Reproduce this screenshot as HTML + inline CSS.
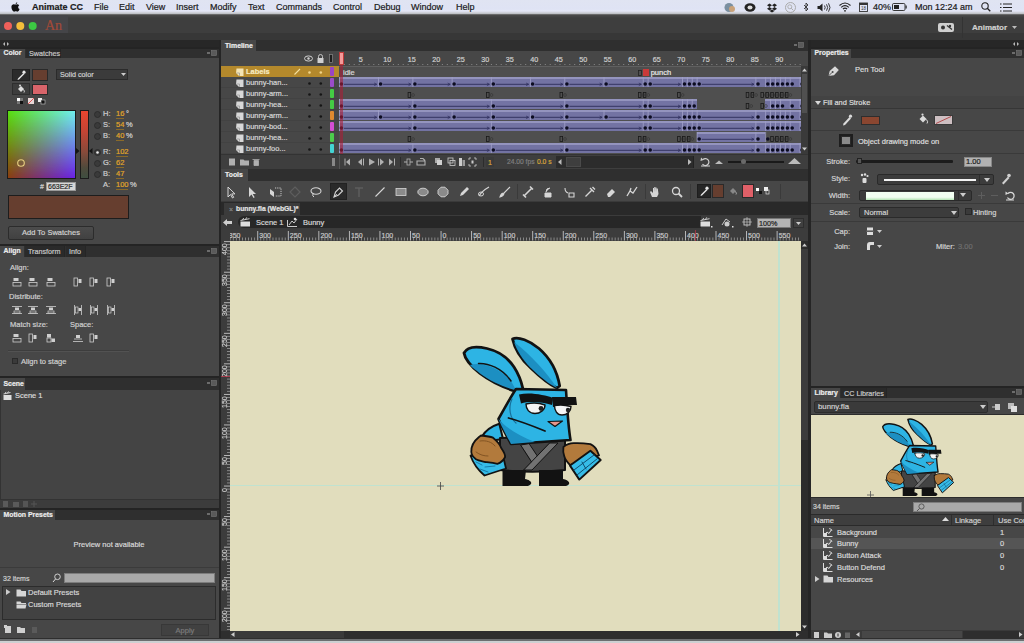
<!DOCTYPE html>
<html><head><meta charset="utf-8">
<style>
html,body{margin:0;padding:0;}
body{width:1024px;height:643px;overflow:hidden;position:relative;background:#3b3b3b;font-family:"Liberation Sans",sans-serif;}
.a{position:absolute;}
.t{position:absolute;white-space:nowrap;-webkit-text-stroke:0.2px currentColor;}
svg.a{overflow:visible;}
</style></head><body>
<div class="a" style="left:0px;top:0px;width:1024px;height:643px;background:#3b3b3b;"></div>
<div class="a" style="left:0px;top:0px;width:1024px;height:15px;background:linear-gradient(#e0e4f2 0px,#dfe3f4 9px,#e4e6f6 11px,#d0d2da 12.5px,#b8babf 14px,#6a6a6a 14.5px);"></div>
<svg class="a" style="left:11px;top:2px;" width="9" height="10" viewBox="0 0 9 10"><path d="M6.2 0.3c0.1 0.9-0.6 1.9-1.5 1.9-0.1-0.9 0.6-1.8 1.5-1.9zM4.6 2.6c0.5 0 1-0.4 1.7-0.4 0.4 0 1.3 0.1 1.9 1-1.6 1-1.3 3.2 0.4 3.9-0.3 0.9-1.1 2.6-2.1 2.6-0.7 0-0.8-0.4-1.7-0.4-0.9 0-1.1 0.4-1.7 0.4C2 9.7 0.4 7.3 0.4 5.1c0-2 1.2-2.9 2.4-2.9 0.7 0 1.3 0.4 1.8 0.4z" fill="#111"/></svg>
<div class="t" style="top:2.80px;font-size:9px;line-height:9px;color:#1a1a1a;font-weight:bold;left:32px;">Animate CC</div>
<div class="t" style="top:2.80px;font-size:9px;line-height:9px;color:#1a1a1a;left:94px;">File</div>
<div class="t" style="top:2.80px;font-size:9px;line-height:9px;color:#1a1a1a;left:119px;">Edit</div>
<div class="t" style="top:2.80px;font-size:9px;line-height:9px;color:#1a1a1a;left:146px;">View</div>
<div class="t" style="top:2.80px;font-size:9px;line-height:9px;color:#1a1a1a;left:176px;">Insert</div>
<div class="t" style="top:2.80px;font-size:9px;line-height:9px;color:#1a1a1a;left:210px;">Modify</div>
<div class="t" style="top:2.80px;font-size:9px;line-height:9px;color:#1a1a1a;left:248px;">Text</div>
<div class="t" style="top:2.80px;font-size:9px;line-height:9px;color:#1a1a1a;left:276px;">Commands</div>
<div class="t" style="top:2.80px;font-size:9px;line-height:9px;color:#1a1a1a;left:333px;">Control</div>
<div class="t" style="top:2.80px;font-size:9px;line-height:9px;color:#1a1a1a;left:374px;">Debug</div>
<div class="t" style="top:2.80px;font-size:9px;line-height:9px;color:#1a1a1a;left:411px;">Window</div>
<div class="t" style="top:2.80px;font-size:9px;line-height:9px;color:#1a1a1a;left:456px;">Help</div>
<svg class="a" style="left:724px;top:2px;" width="12" height="11" viewBox="0 0 12 11"><circle cx="5" cy="5.5" r="4.5" fill="#7a8fa0"/><circle cx="8" cy="7" r="3" fill="#c9a27a"/></svg>
<svg class="a" style="left:744px;top:3px;" width="12" height="9" viewBox="0 0 12 9"><ellipse cx="6" cy="4.5" rx="5.5" ry="4.2" fill="#222"/><ellipse cx="6" cy="4.5" rx="2.5" ry="2" fill="#ddd"/></svg>
<svg class="a" style="left:767px;top:3px;" width="10" height="9" viewBox="0 0 10 9"><path d="M2.5 0.5L5 2.2 2.5 4 0 2.2zM7.5 0.5L10 2.2 7.5 4 5 2.2zM2.5 4L5 5.8 2.5 7.5 0 5.8zM7.5 4L10 5.8 7.5 7.5 5 5.8zM5 6.5l2.5 1.6L5 9.5 2.5 8.1z" fill="#222"/></svg>
<svg class="a" style="left:785px;top:2px;" width="11" height="11" viewBox="0 0 11 11"><circle cx="5.5" cy="5.5" r="5" fill="none" stroke="#aaa" stroke-width="1"/><circle cx="4.8" cy="4.8" r="2" fill="none" stroke="#aaa" stroke-width="0.9"/><path d="M6.3 6.3l2 2" stroke="#aaa" stroke-width="1"/></svg>
<svg class="a" style="left:803px;top:2px;" width="6" height="11" viewBox="0 0 6 11"><path d="M1 3l4 4-2 2V1l2 2-4 4" fill="none" stroke="#333" stroke-width="0.9"/></svg>
<svg class="a" style="left:817px;top:3px;" width="14" height="9" viewBox="0 0 14 9"><path d="M0.5 3h2l3-2.5v8l-3-2.5h-2z" fill="#222"/><path d="M7.5 2.5q1.3 2 0 4M9.5 1.3q2.3 3.2 0 6.4M11.5 0.3q3 4.2 0 8.4" fill="none" stroke="#222" stroke-width="0.9"/></svg>
<svg class="a" style="left:839px;top:2px;" width="12" height="10" viewBox="0 0 12 10"><path d="M0.5 3.5q5.5-5 11 0M2.2 5.3q3.8-3.3 7.6 0M3.9 7q2.1-1.7 4.2 0" fill="none" stroke="#222" stroke-width="1.1"/><circle cx="6" cy="8.8" r="0.9" fill="#222"/></svg>
<svg class="a" style="left:859px;top:2px;" width="9" height="10" viewBox="0 0 9 10"><rect x="0.5" y="1" width="8" height="8.5" fill="none" stroke="#333" stroke-width="0.9"/><rect x="0.5" y="1" width="8" height="2" fill="#333"/><text x="4.5" y="8.4" font-size="4.5" text-anchor="middle" fill="#333" font-family="Liberation Sans">18</text></svg>
<div class="t" style="top:2.80px;font-size:9px;line-height:9px;color:#1a1a1a;left:873px;">40%</div>
<svg class="a" style="left:892px;top:3px;" width="15" height="8" viewBox="0 0 15 8"><rect x="0.5" y="0.5" width="12.5" height="7" rx="1.2" fill="none" stroke="#222" stroke-width="0.9"/><rect x="2" y="2" width="5" height="4" fill="#222"/><rect x="13.5" y="2.5" width="1.2" height="3" fill="#222"/></svg>
<div class="t" style="top:2.80px;font-size:9px;line-height:9px;color:#1a1a1a;left:915px;">Mon 12:24 am</div>
<svg class="a" style="left:981px;top:2px;" width="10" height="10" viewBox="0 0 10 10"><circle cx="4" cy="4" r="3.2" fill="none" stroke="#222" stroke-width="1.1"/><path d="M6.3 6.3l3 3" stroke="#222" stroke-width="1.3"/></svg>
<svg class="a" style="left:1000px;top:3px;" width="12" height="9" viewBox="0 0 12 9"><path d="M0 1h1.5M3 1h9M0 4.5h1.5M3 4.5h9M0 8h1.5M3 8h9" stroke="#222" stroke-width="1.2"/></svg>
<div class="a" style="left:0px;top:15px;width:1024px;height:18px;background:linear-gradient(#4a4a4a,#3e3e3e 3px);"></div>
<div class="a" style="left:0px;top:33px;width:1024px;height:7px;background:#373737;"></div>
<div class="a" style="left:0px;top:15px;width:68px;height:18px;background:#454548;"></div>
<svg class="a" style="left:3px;top:21px;" width="36" height="10" viewBox="0 0 36 10"><circle cx="5" cy="5" r="4" fill="#f0605a"/><circle cx="17.3" cy="5" r="4" fill="#f5bd3a"/><circle cx="29.7" cy="5" r="4" fill="#3cc943"/></svg>
<div class="t" style="left:45px;top:17px;font-family:'Liberation Serif',serif;font-size:14px;line-height:18px;color:#a24a38;">An</div>
<div class="a" style="left:938px;top:23px;width:16px;height:9px;background:#cfcfcf;border-radius:2px;"></div>
<svg class="a" style="left:938px;top:23px;" width="16" height="9" viewBox="0 0 16 9"><circle cx="5" cy="4.5" r="2" fill="#333"/><path d="M9 2.5l5 4" stroke="#333" stroke-width="1.3"/><circle cx="12" cy="3" r="1.2" fill="#333"/></svg>
<div class="a" style="left:962px;top:17px;width:1px;height:21px;background:#333;"></div>
<div class="t" style="top:23.50px;font-size:8px;line-height:8px;color:#d0d0d0;font-weight:bold;left:972px;">Animator</div>
<svg class="a" style="left:1012px;top:26px;" width="5" height="3" viewBox="0 0 5 3"><path d="M0 0h5L2.5 3z" fill="#bbb"/></svg>
<div class="a" style="left:0px;top:40px;width:219px;height:8px;background:#272727;"></div>
<svg class="a" style="left:3px;top:42px;" width="6" height="4" viewBox="0 0 6 4"><path d="M0 2l2-2v4zM6 2l-2-2v4z" fill="#bbb"/></svg>
<div class="a" style="left:0px;top:48px;width:219px;height:10px;background:#2f2f2f;"></div>
<div class="a" style="left:0px;top:47px;width:219px;height:2px;background:#242424;"></div>
<div class="a" style="left:0px;top:49px;width:25px;height:9px;background:#474747;"></div>
<div class="t" style="top:50.35px;font-size:6.9px;line-height:6.9px;color:#ececec;font-weight:bold;left:3.5px;">Color</div>
<div class="a" style="left:26px;top:49px;width:35px;height:9px;background:#2a2a2a;box-sizing:border-box;border-right:1px solid #252525;"></div>
<div class="t" style="top:50.20px;font-size:7.2px;line-height:7.2px;color:#c8c8c8;left:29px;">Swatches</div>
<svg class="a" style="left:207px;top:50px;" width="10" height="6" viewBox="0 0 10 6"><path d="M0 3h3" stroke="#aaa" stroke-width="1"/><rect x="4.5" y="0.5" width="5" height="5" fill="#5a5a5a" stroke="#777" stroke-width="0.6"/></svg>
<div class="a" style="left:0px;top:58px;width:219px;height:187px;background:#474747;"></div>
<div class="a" style="left:12px;top:69px;width:18px;height:12px;background:#2b2b2b;box-sizing:border-box;border:1px solid #222;"></div>
<svg class="a" style="left:16px;top:70px;" width="10" height="10" viewBox="0 0 10 10"><path d="M2 8.5l5.5-5.5 1 1-5.5 5.5-1.5 0.5z" fill="#e8e8e8"/><circle cx="8" cy="2.2" r="1.6" fill="#e8e8e8"/></svg>
<div class="a" style="left:32px;top:69px;width:16px;height:12px;background:#663e2f;box-sizing:border-box;border:1px solid #2a2a2a;"></div>
<div class="a" style="left:12px;top:83px;width:18px;height:12px;background:#3d3d3d;box-sizing:border-box;border:1px solid #2e2e2e;"></div>
<svg class="a" style="left:16px;top:84px;" width="10" height="10" viewBox="0 0 10 10"><path d="M2 5l3-3 3 3-3 3z" fill="#ddd"/><path d="M7.5 5.5q1.5 2 0.5 3" stroke="#ddd" fill="none"/><circle cx="4" cy="1.5" r="1" fill="#ddd"/></svg>
<div class="a" style="left:32px;top:84px;width:16px;height:11px;background:#d8646a;box-sizing:border-box;border:1px solid #2a2a2a;"></div>
<svg class="a" style="left:17px;top:97px;" width="30" height="8" viewBox="0 0 30 8"><rect x="0" y="1" width="3" height="3" fill="#fff"/><rect x="3" y="4" width="3" height="3" fill="#111"/><rect x="3" y="1" width="3" height="3" fill="#777"/><rect x="0" y="4" width="3" height="3" fill="#777"/><rect x="11" y="1" width="6" height="6" fill="#e8d8d8"/><path d="M11 7l6-6" stroke="#d33" stroke-width="0.8"/><rect x="21" y="1" width="4" height="4" fill="#eee"/><rect x="24" y="3" width="4" height="4" fill="#111" stroke="#ccc" stroke-width="0.6"/></svg>
<div class="a" style="left:56px;top:69px;width:72px;height:11px;background:#3b3b3b;box-sizing:border-box;border:1px solid #2b2b2b;"></div>
<div class="t" style="top:71.20px;font-size:7.2px;line-height:7.2px;color:#cfcfcf;left:60px;">Solid color</div>
<svg class="a" style="left:121px;top:73px;" width="5" height="3" viewBox="0 0 5 3"><path d="M0 0h5L2.5 3z" fill="#ccc"/></svg>
<div class="a" style="left:7px;top:110px;width:69px;height:69px;background:#111;box-sizing:border-box;border:1px solid #1b1b1b;"></div>
<div class="a" style="left:8px;top:111px;width:67px;height:67px;background:linear-gradient(to right,#58e010,#70f0f0);"></div>
<div class="a" style="left:8px;top:111px;width:67px;height:67px;background:linear-gradient(to right,#8a3c10,#6a20e8);-webkit-mask-image:linear-gradient(transparent,#000);mask-image:linear-gradient(transparent,#000);"></div>
<svg class="a" style="left:15.5px;top:157.5px;" width="12" height="12" viewBox="0 0 12 12"><circle cx="5" cy="5" r="3.3" fill="none" stroke="#e8d080" stroke-width="1.1"/></svg>
<div class="a" style="left:80px;top:110px;width:9px;height:69px;background:linear-gradient(#e8452f,#c44434 30%,#8a4a3a 60%,#4e4a3c 85%,#3e4e40);box-sizing:border-box;border:1px solid #1b1b1b;"></div>
<svg class="a" style="left:76px;top:148px;" width="4" height="6" viewBox="0 0 4 6"><path d="M0 0l3.5 3L0 6z" fill="#151515"/></svg>
<svg class="a" style="left:89px;top:148px;" width="4" height="6" viewBox="0 0 4 6"><path d="M3.5 0L0 3l3.5 3z" fill="#151515"/></svg>
<svg class="a" style="left:94px;top:111px;" width="7" height="7" viewBox="0 0 7 7"><circle cx="3.5" cy="3.5" r="3" fill="#3a3a3a" stroke="#2a2a2a" stroke-width="0.8"/></svg>
<div class="t" style="top:110.25px;font-size:7.5px;line-height:7.5px;color:#cfcfcf;left:103px;">H:</div>
<div class="t" style="top:110.25px;font-size:7.5px;line-height:7.5px;color:#e0a52a;left:116px;">16</div>
<div class="a" style="left:116px;top:118px;width:8px;height:1px;background:#8a6a2a;"></div>
<div class="t" style="top:110.25px;font-size:7.5px;line-height:7.5px;color:#cfcfcf;left:125.9px;">°</div>
<svg class="a" style="left:94px;top:122px;" width="7" height="7" viewBox="0 0 7 7"><circle cx="3.5" cy="3.5" r="3" fill="#3a3a3a" stroke="#2a2a2a" stroke-width="0.8"/></svg>
<div class="t" style="top:121.25px;font-size:7.5px;line-height:7.5px;color:#cfcfcf;left:103px;">S:</div>
<div class="t" style="top:121.25px;font-size:7.5px;line-height:7.5px;color:#e0a52a;left:116px;">54</div>
<div class="a" style="left:116px;top:129px;width:8px;height:1px;background:#8a6a2a;"></div>
<div class="t" style="top:121.25px;font-size:7.5px;line-height:7.5px;color:#cfcfcf;left:125.9px;">%</div>
<svg class="a" style="left:94px;top:133px;" width="7" height="7" viewBox="0 0 7 7"><circle cx="3.5" cy="3.5" r="3" fill="#3a3a3a" stroke="#2a2a2a" stroke-width="0.8"/></svg>
<div class="t" style="top:132.25px;font-size:7.5px;line-height:7.5px;color:#cfcfcf;left:103px;">B:</div>
<div class="t" style="top:132.25px;font-size:7.5px;line-height:7.5px;color:#e0a52a;left:116px;">40</div>
<div class="a" style="left:116px;top:140px;width:8px;height:1px;background:#8a6a2a;"></div>
<div class="t" style="top:132.25px;font-size:7.5px;line-height:7.5px;color:#cfcfcf;left:125.9px;">%</div>
<svg class="a" style="left:94px;top:149px;" width="7" height="7" viewBox="0 0 7 7"><circle cx="3.5" cy="3.5" r="3" fill="#3a3a3a" stroke="#2a2a2a" stroke-width="0.8"/><circle cx="3.5" cy="3.5" r="1.3" fill="#eee"/></svg>
<div class="t" style="top:148.25px;font-size:7.5px;line-height:7.5px;color:#cfcfcf;left:103px;">R:</div>
<div class="t" style="top:148.25px;font-size:7.5px;line-height:7.5px;color:#e0a52a;left:116px;">102</div>
<div class="a" style="left:116px;top:156px;width:12px;height:1px;background:#8a6a2a;"></div>
<svg class="a" style="left:94px;top:160px;" width="7" height="7" viewBox="0 0 7 7"><circle cx="3.5" cy="3.5" r="3" fill="#3a3a3a" stroke="#2a2a2a" stroke-width="0.8"/></svg>
<div class="t" style="top:159.25px;font-size:7.5px;line-height:7.5px;color:#cfcfcf;left:103px;">G:</div>
<div class="t" style="top:159.25px;font-size:7.5px;line-height:7.5px;color:#e0a52a;left:116px;">62</div>
<div class="a" style="left:116px;top:167px;width:8px;height:1px;background:#8a6a2a;"></div>
<svg class="a" style="left:94px;top:171px;" width="7" height="7" viewBox="0 0 7 7"><circle cx="3.5" cy="3.5" r="3" fill="#3a3a3a" stroke="#2a2a2a" stroke-width="0.8"/></svg>
<div class="t" style="top:170.25px;font-size:7.5px;line-height:7.5px;color:#cfcfcf;left:103px;">B:</div>
<div class="t" style="top:170.25px;font-size:7.5px;line-height:7.5px;color:#e0a52a;left:116px;">47</div>
<div class="a" style="left:116px;top:178px;width:8px;height:1px;background:#8a6a2a;"></div>
<div class="t" style="top:181.25px;font-size:7.5px;line-height:7.5px;color:#cfcfcf;left:103px;">A:</div>
<div class="t" style="top:181.25px;font-size:7.5px;line-height:7.5px;color:#e0a52a;left:116px;">100</div>
<div class="a" style="left:116px;top:189px;width:12px;height:1px;background:#8a6a2a;"></div>
<div class="t" style="top:181.25px;font-size:7.5px;line-height:7.5px;color:#cfcfcf;left:130.1px;">%</div>
<div class="t" style="top:182.50px;font-size:7px;line-height:7px;color:#cfcfcf;left:40px;">#</div>
<div class="a" style="left:46px;top:182px;width:30px;height:9px;background:#d6d6d6;box-sizing:border-box;border:1px solid #999;"></div>
<div class="t" style="top:182.80px;font-size:7px;line-height:7px;color:#2a2a2a;left:48px;">663E2F</div>
<div class="a" style="left:8px;top:195px;width:121px;height:24px;background:#663e2f;box-sizing:border-box;border:1px solid #1d1d1d;"></div>
<div class="a" style="left:8px;top:226px;width:86px;height:14px;background:linear-gradient(#4c4c4c,#414141);box-sizing:border-box;border:1px solid #2c2c2c;border-radius:2px;"></div>
<div class="t" style="top:229.25px;font-size:7.5px;line-height:7.5px;color:#d0d0d0;left:-149px;width:400px;text-align:center;">Add To Swatches</div>
<div class="a" style="left:0px;top:245px;width:219px;height:12px;background:#2f2f2f;"></div>
<div class="a" style="left:0px;top:244px;width:219px;height:2px;background:#242424;"></div>
<div class="a" style="left:0px;top:246px;width:24px;height:11px;background:#474747;"></div>
<div class="t" style="top:248.35px;font-size:6.9px;line-height:6.9px;color:#ececec;font-weight:bold;left:3.5px;">Align</div>
<div class="a" style="left:25px;top:246px;width:40px;height:11px;background:#2a2a2a;box-sizing:border-box;border-right:1px solid #252525;"></div>
<div class="t" style="top:248.20px;font-size:7.2px;line-height:7.2px;color:#c8c8c8;left:28px;">Transform</div>
<div class="a" style="left:66px;top:246px;width:20px;height:11px;background:#2a2a2a;box-sizing:border-box;border-right:1px solid #252525;"></div>
<div class="t" style="top:248.20px;font-size:7.2px;line-height:7.2px;color:#c8c8c8;left:69px;">Info</div>
<svg class="a" style="left:207px;top:248px;" width="10" height="6" viewBox="0 0 10 6"><path d="M0 3h3" stroke="#aaa" stroke-width="1"/><rect x="4.5" y="0.5" width="5" height="5" fill="#5a5a5a" stroke="#777" stroke-width="0.6"/></svg>
<div class="a" style="left:0px;top:257px;width:219px;height:119px;background:#474747;"></div>
<div class="t" style="top:264.25px;font-size:7.5px;line-height:7.5px;color:#cfcfcf;left:10px;">Align:</div>
<svg class="a" style="left:12px;top:277px;" width="10" height="10" viewBox="0 0 10 10"><rect x="1.5" y="1" width="5" height="3" fill="#cfcfcf"/><rect x="1" y="5.5" width="8" height="3.5" fill="none" stroke="#cfcfcf" stroke-width="0.8"/></svg>
<svg class="a" style="left:28px;top:277px;" width="10" height="10" viewBox="0 0 10 10"><rect x="1.5" y="1" width="5" height="3" fill="#cfcfcf"/><rect x="1" y="5.5" width="8" height="3.5" fill="none" stroke="#cfcfcf" stroke-width="0.8"/></svg>
<svg class="a" style="left:46px;top:277px;" width="10" height="10" viewBox="0 0 10 10"><rect x="1.5" y="1" width="5" height="3" fill="#cfcfcf"/><rect x="1" y="5.5" width="8" height="3.5" fill="none" stroke="#cfcfcf" stroke-width="0.8"/></svg>
<svg class="a" style="left:73px;top:277px;" width="10" height="10" viewBox="0 0 10 10"><rect x="1" y="1" width="3.5" height="8" fill="none" stroke="#cfcfcf" stroke-width="0.8"/><rect x="5.5" y="2" width="3" height="4" fill="#cfcfcf"/></svg>
<svg class="a" style="left:89px;top:277px;" width="10" height="10" viewBox="0 0 10 10"><rect x="1" y="1" width="3.5" height="8" fill="none" stroke="#cfcfcf" stroke-width="0.8"/><rect x="5.5" y="2" width="3" height="4" fill="#cfcfcf"/></svg>
<svg class="a" style="left:106px;top:277px;" width="10" height="10" viewBox="0 0 10 10"><rect x="1" y="1" width="3.5" height="8" fill="none" stroke="#cfcfcf" stroke-width="0.8"/><rect x="5.5" y="2" width="3" height="4" fill="#cfcfcf"/></svg>
<div class="t" style="top:292.75px;font-size:7.5px;line-height:7.5px;color:#cfcfcf;left:9px;">Distribute:</div>
<svg class="a" style="left:12px;top:305px;" width="10" height="10" viewBox="0 0 10 10"><path d="M0 1.5h10M0 8.5h10" stroke="#cfcfcf" stroke-width="0.8"/><rect x="3" y="2.5" width="4" height="2.5" fill="#cfcfcf"/><rect x="2" y="6" width="6" height="2" fill="none" stroke="#cfcfcf" stroke-width="0.7"/></svg>
<svg class="a" style="left:28px;top:305px;" width="10" height="10" viewBox="0 0 10 10"><path d="M0 1.5h10M0 8.5h10" stroke="#cfcfcf" stroke-width="0.8"/><rect x="3" y="2.5" width="4" height="2.5" fill="#cfcfcf"/><rect x="2" y="6" width="6" height="2" fill="none" stroke="#cfcfcf" stroke-width="0.7"/></svg>
<svg class="a" style="left:46px;top:305px;" width="10" height="10" viewBox="0 0 10 10"><path d="M0 1.5h10M0 8.5h10" stroke="#cfcfcf" stroke-width="0.8"/><rect x="3" y="2.5" width="4" height="2.5" fill="#cfcfcf"/><rect x="2" y="6" width="6" height="2" fill="none" stroke="#cfcfcf" stroke-width="0.7"/></svg>
<svg class="a" style="left:73px;top:305px;" width="10" height="10" viewBox="0 0 10 10"><path d="M1.5 0v10M8.5 0v10" stroke="#cfcfcf" stroke-width="0.8"/><rect x="2.5" y="2" width="2.5" height="6" fill="none" stroke="#cfcfcf" stroke-width="0.7"/><rect x="5.5" y="3" width="2.5" height="3" fill="#cfcfcf"/></svg>
<svg class="a" style="left:89px;top:305px;" width="10" height="10" viewBox="0 0 10 10"><path d="M1.5 0v10M8.5 0v10" stroke="#cfcfcf" stroke-width="0.8"/><rect x="2.5" y="2" width="2.5" height="6" fill="none" stroke="#cfcfcf" stroke-width="0.7"/><rect x="5.5" y="3" width="2.5" height="3" fill="#cfcfcf"/></svg>
<svg class="a" style="left:106px;top:305px;" width="10" height="10" viewBox="0 0 10 10"><path d="M1.5 0v10M8.5 0v10" stroke="#cfcfcf" stroke-width="0.8"/><rect x="2.5" y="2" width="2.5" height="6" fill="none" stroke="#cfcfcf" stroke-width="0.7"/><rect x="5.5" y="3" width="2.5" height="3" fill="#cfcfcf"/></svg>
<div class="t" style="top:321.25px;font-size:7.5px;line-height:7.5px;color:#cfcfcf;left:10px;">Match size:</div>
<div class="t" style="top:321.25px;font-size:7.5px;line-height:7.5px;color:#cfcfcf;left:70px;">Space:</div>
<svg class="a" style="left:12px;top:333px;" width="10" height="10" viewBox="0 0 10 10"><rect x="1.5" y="1" width="5" height="3" fill="#cfcfcf"/><rect x="1" y="5.5" width="8" height="3.5" fill="none" stroke="#cfcfcf" stroke-width="0.8"/></svg>
<svg class="a" style="left:28px;top:333px;" width="10" height="10" viewBox="0 0 10 10"><rect x="1" y="1" width="3.5" height="8" fill="none" stroke="#cfcfcf" stroke-width="0.8"/><rect x="5.5" y="2" width="3" height="4" fill="#cfcfcf"/></svg>
<svg class="a" style="left:46px;top:333px;" width="10" height="10" viewBox="0 0 10 10"><rect x="1" y="1" width="4" height="3.5" fill="#cfcfcf"/><rect x="1" y="5" width="4" height="4" fill="none" stroke="#cfcfcf" stroke-width="0.8"/><rect x="5.5" y="5.5" width="3.5" height="3.5" fill="#cfcfcf"/></svg>
<svg class="a" style="left:73px;top:333px;" width="10" height="10" viewBox="0 0 10 10"><path d="M0 8.5h10" stroke="#cfcfcf" stroke-width="0.8"/><rect x="3" y="2" width="4" height="3" fill="#cfcfcf"/><path d="M1 6h8" stroke="#cfcfcf" stroke-width="0.8"/></svg>
<svg class="a" style="left:89px;top:333px;" width="10" height="10" viewBox="0 0 10 10"><rect x="1" y="1" width="3.5" height="8" fill="none" stroke="#cfcfcf" stroke-width="0.8"/><rect x="5.5" y="2" width="3" height="4" fill="#cfcfcf"/></svg>
<div class="a" style="left:8px;top:350px;width:121px;height:1px;background:#3d3d3d;"></div>
<div class="a" style="left:8px;top:351px;width:121px;height:1px;background:#525252;"></div>
<div class="a" style="left:12px;top:358px;width:6px;height:6px;background:#3a3a3a;box-sizing:border-box;border:1px solid #2a2a2a;"></div>
<div class="t" style="top:357.55px;font-size:7.5px;line-height:7.5px;color:#d0d0d0;left:21px;">Align to stage</div>
<div class="a" style="left:0px;top:376px;width:219px;height:1px;background:#2a2a2a;"></div>
<div class="a" style="left:0px;top:377px;width:219px;height:13px;background:#2f2f2f;"></div>
<div class="a" style="left:0px;top:376px;width:219px;height:2px;background:#242424;"></div>
<div class="a" style="left:0px;top:378px;width:25px;height:12px;background:#474747;"></div>
<div class="t" style="top:380.85px;font-size:6.9px;line-height:6.9px;color:#ececec;font-weight:bold;left:3.5px;">Scene</div>
<svg class="a" style="left:207px;top:380px;" width="10" height="6" viewBox="0 0 10 6"><path d="M0 3h3" stroke="#aaa" stroke-width="1"/><rect x="4.5" y="0.5" width="5" height="5" fill="#5a5a5a" stroke="#777" stroke-width="0.6"/></svg>
<div class="a" style="left:0px;top:390px;width:219px;height:109px;background:#444444;"></div>
<div class="a" style="left:0px;top:390px;width:1px;height:109px;background:#333;"></div>
<svg class="a" style="left:3px;top:391px;" width="9" height="10" viewBox="0 0 9 10"><path d="M0.5 3l7-1.5M2 2.7l1-1.8M4.5 2.2l1-1.8" stroke="#ddd" stroke-width="0.9"/><rect x="0.5" y="4" width="8" height="5" fill="#ddd"/></svg>
<div class="t" style="top:392.25px;font-size:7.5px;line-height:7.5px;color:#dadada;left:15px;">Scene 1</div>
<div class="a" style="left:0px;top:499px;width:219px;height:9px;background:#3c3c3c;"></div>
<div class="a" style="left:0px;top:499px;width:219px;height:1px;background:#333;"></div>
<svg class="a" style="left:2px;top:500px;" width="40" height="8" viewBox="0 0 40 8"><rect x="1" y="1" width="5" height="6" fill="#5a5a5a"/><rect x="11" y="2" width="6" height="5" fill="#5a5a5a"/><rect x="21" y="1" width="5" height="6" fill="#555"/><path d="M32 1v6M29 4h6" stroke="#555"/></svg>
<div class="a" style="left:0px;top:508px;width:219px;height:1px;background:#2a2a2a;"></div>
<div class="a" style="left:0px;top:509px;width:219px;height:11px;background:#2f2f2f;"></div>
<div class="a" style="left:0px;top:508px;width:219px;height:2px;background:#242424;"></div>
<div class="a" style="left:0px;top:510px;width:55px;height:10px;background:#474747;"></div>
<div class="t" style="top:511.85px;font-size:6.9px;line-height:6.9px;color:#ececec;font-weight:bold;left:3.5px;">Motion Presets</div>
<svg class="a" style="left:207px;top:511px;" width="10" height="6" viewBox="0 0 10 6"><path d="M0 3h3" stroke="#aaa" stroke-width="1"/><rect x="4.5" y="0.5" width="5" height="5" fill="#5a5a5a" stroke="#777" stroke-width="0.6"/></svg>
<div class="a" style="left:0px;top:520px;width:219px;height:118px;background:#474747;"></div>
<div class="t" style="top:540.75px;font-size:7.5px;line-height:7.5px;color:#d6d6d6;left:-91px;width:400px;text-align:center;">Preview not available</div>
<div class="a" style="left:0px;top:567px;width:219px;height:1px;background:#3b3b3b;"></div>
<div class="t" style="top:575.00px;font-size:7px;line-height:7px;color:#cfcfcf;left:3px;">32 items</div>
<svg class="a" style="left:52px;top:573px;" width="9" height="10" viewBox="0 0 9 10"><circle cx="5.5" cy="3.8" r="2.8" fill="none" stroke="#ddd" stroke-width="0.9"/><path d="M3.5 6l-2.5 3" stroke="#ddd" stroke-width="1"/></svg>
<div class="a" style="left:64px;top:573px;width:151px;height:10px;background:#a9a9a9;box-sizing:border-box;border:1px solid #7d7d7d;"></div>
<div class="a" style="left:2px;top:586px;width:214px;height:34px;background:#424242;box-sizing:border-box;border:1px solid #2c2c2c;"></div>
<svg class="a" style="left:6px;top:589px;" width="5" height="6" viewBox="0 0 5 6"><path d="M0 0l4.5 3L0 6z" fill="#ccc"/></svg>
<svg class="a" style="left:16px;top:588px;" width="11" height="9" viewBox="0 0 11 9"><path d="M0.5 1.5h4l1 1.5h4.5v5.5H0.5z" fill="#d6d6d6"/></svg>
<div class="t" style="top:588.75px;font-size:7.5px;line-height:7.5px;color:#d6d6d6;left:28px;">Default Presets</div>
<svg class="a" style="left:16px;top:600px;" width="11" height="9" viewBox="0 0 11 9"><path d="M0.5 1.5h4l1 1.5h4.5v1H0.5z" fill="#d6d6d6"/><path d="M0.5 4.5h10l-1 4H0.5z" fill="#d6d6d6"/></svg>
<div class="t" style="top:600.75px;font-size:7.5px;line-height:7.5px;color:#d6d6d6;left:28px;">Custom Presets</div>
<svg class="a" style="left:4px;top:625px;" width="36" height="10" viewBox="0 0 36 10"><rect x="1" y="1" width="6" height="7" fill="#cfcfcf"/><rect x="0" y="0" width="3" height="3" fill="#cfcfcf"/><path d="M13 2h3l1 1h4v5h-8z" fill="#cfcfcf"/><rect x="28" y="2" width="5" height="6" fill="#5a5a5a"/></svg>
<div class="a" style="left:161px;top:624px;width:48px;height:12px;background:#414141;box-sizing:border-box;border:1px solid #383838;"></div>
<div class="t" style="top:626.55px;font-size:7.5px;line-height:7.5px;color:#7a7a7a;left:-15px;width:400px;text-align:center;">Apply</div>
<div class="a" style="left:219px;top:40px;width:2px;height:598px;background:#252525;"></div>
<div class="a" style="left:221px;top:40px;width:587px;height:11px;background:#2f2f2f;"></div>
<div class="a" style="left:221px;top:40px;width:35px;height:11px;background:#474747;"></div>
<div class="t" style="top:42.55px;font-size:6.9px;line-height:6.9px;color:#ececec;font-weight:bold;left:225px;">Timeline</div>
<svg class="a" style="left:794px;top:42px;" width="10" height="6" viewBox="0 0 10 6"><path d="M0 3h3" stroke="#aaa" stroke-width="1"/><rect x="4.5" y="0.5" width="5" height="5" fill="#5a5a5a" stroke="#777" stroke-width="0.6"/></svg>
<div class="a" style="left:221px;top:51px;width:587px;height:15px;background:#474747;"></div>
<svg class="a" style="left:304px;top:54px;" width="32" height="9" viewBox="0 0 32 9"><ellipse cx="4.5" cy="4.5" rx="4" ry="2.6" fill="none" stroke="#d0d0d0" stroke-width="1"/><circle cx="4.5" cy="4.5" r="1.2" fill="#d0d0d0"/><path d="M14.5 4V2.5a2 2 0 0 1 4 0V4" fill="none" stroke="#d0d0d0" stroke-width="0.9"/><rect x="13.5" y="4" width="6" height="5" fill="#d0d0d0"/><rect x="25.5" y="0.5" width="3" height="8" fill="#1e1e1e" stroke="#888" stroke-width="0.7"/></svg>
<div class="t" style="top:56.00px;font-size:7.2px;line-height:7.2px;color:#cfcfcf;left:358.8px;">5</div>
<div class="t" style="top:56.00px;font-size:7.2px;line-height:7.2px;color:#cfcfcf;left:383.3px;">10</div>
<div class="t" style="top:56.00px;font-size:7.2px;line-height:7.2px;color:#cfcfcf;left:407.8px;">15</div>
<div class="t" style="top:56.00px;font-size:7.2px;line-height:7.2px;color:#cfcfcf;left:432.3px;">20</div>
<div class="t" style="top:56.00px;font-size:7.2px;line-height:7.2px;color:#cfcfcf;left:456.8px;">25</div>
<div class="t" style="top:56.00px;font-size:7.2px;line-height:7.2px;color:#cfcfcf;left:481.3px;">30</div>
<div class="t" style="top:56.00px;font-size:7.2px;line-height:7.2px;color:#cfcfcf;left:505.8px;">35</div>
<div class="t" style="top:56.00px;font-size:7.2px;line-height:7.2px;color:#cfcfcf;left:530.3000000000001px;">40</div>
<div class="t" style="top:56.00px;font-size:7.2px;line-height:7.2px;color:#cfcfcf;left:554.8000000000001px;">45</div>
<div class="t" style="top:56.00px;font-size:7.2px;line-height:7.2px;color:#cfcfcf;left:579.3000000000001px;">50</div>
<div class="t" style="top:56.00px;font-size:7.2px;line-height:7.2px;color:#cfcfcf;left:603.8000000000001px;">55</div>
<div class="t" style="top:56.00px;font-size:7.2px;line-height:7.2px;color:#cfcfcf;left:628.3000000000001px;">60</div>
<div class="t" style="top:56.00px;font-size:7.2px;line-height:7.2px;color:#cfcfcf;left:652.8000000000001px;">65</div>
<div class="t" style="top:56.00px;font-size:7.2px;line-height:7.2px;color:#cfcfcf;left:677.3000000000001px;">70</div>
<div class="t" style="top:56.00px;font-size:7.2px;line-height:7.2px;color:#cfcfcf;left:701.8000000000001px;">75</div>
<div class="t" style="top:56.00px;font-size:7.2px;line-height:7.2px;color:#cfcfcf;left:726.3000000000001px;">80</div>
<div class="t" style="top:56.00px;font-size:7.2px;line-height:7.2px;color:#cfcfcf;left:750.8000000000001px;">85</div>
<div class="t" style="top:56.00px;font-size:7.2px;line-height:7.2px;color:#cfcfcf;left:775.3000000000001px;">90</div>
<svg class="a" style="left:339px;top:64px;" width="462" height="2" viewBox="0 0 462 2"><rect x="0.0" y="0" width="1" height="1" fill="#8a8a8a"/><rect x="4.9" y="0" width="1" height="1" fill="#8a8a8a"/><rect x="9.8" y="0" width="1" height="1" fill="#8a8a8a"/><rect x="14.7" y="0" width="1" height="1" fill="#8a8a8a"/><rect x="19.6" y="0" width="1" height="1" fill="#8a8a8a"/><rect x="24.5" y="0" width="1" height="1" fill="#8a8a8a"/><rect x="29.4" y="0" width="1" height="1" fill="#8a8a8a"/><rect x="34.3" y="0" width="1" height="1" fill="#8a8a8a"/><rect x="39.2" y="0" width="1" height="1" fill="#8a8a8a"/><rect x="44.1" y="0" width="1" height="1" fill="#8a8a8a"/><rect x="49.0" y="0" width="1" height="1" fill="#8a8a8a"/><rect x="53.9" y="0" width="1" height="1" fill="#8a8a8a"/><rect x="58.8" y="0" width="1" height="1" fill="#8a8a8a"/><rect x="63.7" y="0" width="1" height="1" fill="#8a8a8a"/><rect x="68.6" y="0" width="1" height="1" fill="#8a8a8a"/><rect x="73.5" y="0" width="1" height="1" fill="#8a8a8a"/><rect x="78.4" y="0" width="1" height="1" fill="#8a8a8a"/><rect x="83.3" y="0" width="1" height="1" fill="#8a8a8a"/><rect x="88.2" y="0" width="1" height="1" fill="#8a8a8a"/><rect x="93.1" y="0" width="1" height="1" fill="#8a8a8a"/><rect x="98.0" y="0" width="1" height="1" fill="#8a8a8a"/><rect x="102.9" y="0" width="1" height="1" fill="#8a8a8a"/><rect x="107.8" y="0" width="1" height="1" fill="#8a8a8a"/><rect x="112.7" y="0" width="1" height="1" fill="#8a8a8a"/><rect x="117.6" y="0" width="1" height="1" fill="#8a8a8a"/><rect x="122.5" y="0" width="1" height="1" fill="#8a8a8a"/><rect x="127.4" y="0" width="1" height="1" fill="#8a8a8a"/><rect x="132.3" y="0" width="1" height="1" fill="#8a8a8a"/><rect x="137.2" y="0" width="1" height="1" fill="#8a8a8a"/><rect x="142.1" y="0" width="1" height="1" fill="#8a8a8a"/><rect x="147.0" y="0" width="1" height="1" fill="#8a8a8a"/><rect x="151.9" y="0" width="1" height="1" fill="#8a8a8a"/><rect x="156.8" y="0" width="1" height="1" fill="#8a8a8a"/><rect x="161.7" y="0" width="1" height="1" fill="#8a8a8a"/><rect x="166.6" y="0" width="1" height="1" fill="#8a8a8a"/><rect x="171.5" y="0" width="1" height="1" fill="#8a8a8a"/><rect x="176.4" y="0" width="1" height="1" fill="#8a8a8a"/><rect x="181.3" y="0" width="1" height="1" fill="#8a8a8a"/><rect x="186.2" y="0" width="1" height="1" fill="#8a8a8a"/><rect x="191.1" y="0" width="1" height="1" fill="#8a8a8a"/><rect x="196.0" y="0" width="1" height="1" fill="#8a8a8a"/><rect x="200.9" y="0" width="1" height="1" fill="#8a8a8a"/><rect x="205.8" y="0" width="1" height="1" fill="#8a8a8a"/><rect x="210.7" y="0" width="1" height="1" fill="#8a8a8a"/><rect x="215.6" y="0" width="1" height="1" fill="#8a8a8a"/><rect x="220.5" y="0" width="1" height="1" fill="#8a8a8a"/><rect x="225.4" y="0" width="1" height="1" fill="#8a8a8a"/><rect x="230.3" y="0" width="1" height="1" fill="#8a8a8a"/><rect x="235.2" y="0" width="1" height="1" fill="#8a8a8a"/><rect x="240.1" y="0" width="1" height="1" fill="#8a8a8a"/><rect x="245.0" y="0" width="1" height="1" fill="#8a8a8a"/><rect x="249.9" y="0" width="1" height="1" fill="#8a8a8a"/><rect x="254.8" y="0" width="1" height="1" fill="#8a8a8a"/><rect x="259.7" y="0" width="1" height="1" fill="#8a8a8a"/><rect x="264.6" y="0" width="1" height="1" fill="#8a8a8a"/><rect x="269.5" y="0" width="1" height="1" fill="#8a8a8a"/><rect x="274.4" y="0" width="1" height="1" fill="#8a8a8a"/><rect x="279.3" y="0" width="1" height="1" fill="#8a8a8a"/><rect x="284.2" y="0" width="1" height="1" fill="#8a8a8a"/><rect x="289.1" y="0" width="1" height="1" fill="#8a8a8a"/><rect x="294.0" y="0" width="1" height="1" fill="#8a8a8a"/><rect x="298.9" y="0" width="1" height="1" fill="#8a8a8a"/><rect x="303.8" y="0" width="1" height="1" fill="#8a8a8a"/><rect x="308.7" y="0" width="1" height="1" fill="#8a8a8a"/><rect x="313.6" y="0" width="1" height="1" fill="#8a8a8a"/><rect x="318.5" y="0" width="1" height="1" fill="#8a8a8a"/><rect x="323.4" y="0" width="1" height="1" fill="#8a8a8a"/><rect x="328.3" y="0" width="1" height="1" fill="#8a8a8a"/><rect x="333.2" y="0" width="1" height="1" fill="#8a8a8a"/><rect x="338.1" y="0" width="1" height="1" fill="#8a8a8a"/><rect x="343.0" y="0" width="1" height="1" fill="#8a8a8a"/><rect x="347.9" y="0" width="1" height="1" fill="#8a8a8a"/><rect x="352.8" y="0" width="1" height="1" fill="#8a8a8a"/><rect x="357.7" y="0" width="1" height="1" fill="#8a8a8a"/><rect x="362.6" y="0" width="1" height="1" fill="#8a8a8a"/><rect x="367.5" y="0" width="1" height="1" fill="#8a8a8a"/><rect x="372.4" y="0" width="1" height="1" fill="#8a8a8a"/><rect x="377.3" y="0" width="1" height="1" fill="#8a8a8a"/><rect x="382.2" y="0" width="1" height="1" fill="#8a8a8a"/><rect x="387.1" y="0" width="1" height="1" fill="#8a8a8a"/><rect x="392.0" y="0" width="1" height="1" fill="#8a8a8a"/><rect x="396.9" y="0" width="1" height="1" fill="#8a8a8a"/><rect x="401.8" y="0" width="1" height="1" fill="#8a8a8a"/><rect x="406.7" y="0" width="1" height="1" fill="#8a8a8a"/><rect x="411.6" y="0" width="1" height="1" fill="#8a8a8a"/><rect x="416.5" y="0" width="1" height="1" fill="#8a8a8a"/><rect x="421.4" y="0" width="1" height="1" fill="#8a8a8a"/><rect x="426.3" y="0" width="1" height="1" fill="#8a8a8a"/><rect x="431.2" y="0" width="1" height="1" fill="#8a8a8a"/><rect x="436.1" y="0" width="1" height="1" fill="#8a8a8a"/><rect x="441.0" y="0" width="1" height="1" fill="#8a8a8a"/><rect x="445.9" y="0" width="1" height="1" fill="#8a8a8a"/><rect x="450.8" y="0" width="1" height="1" fill="#8a8a8a"/><rect x="455.7" y="0" width="1" height="1" fill="#8a8a8a"/><rect x="460.6" y="0" width="1" height="1" fill="#8a8a8a"/></svg>
<div class="a" style="left:221px;top:66px;width:118px;height:11px;background:#b4892c;"></div>
<svg class="a" style="left:236px;top:68px;" width="8" height="8" viewBox="0 0 8 8"><path d="M0.5 0.5h7v7.5h-4.5l-3-3z" fill="#f4e4b4"/><path d="M0.5 5h3v3" fill="none" stroke="#888" stroke-width="0.6"/></svg>
<div class="t" style="top:67.85px;font-size:7.5px;line-height:7.5px;color:#f6e9c0;font-weight:bold;left:246px;">Labels</div>
<svg class="a" style="left:308px;top:70.6px;" width="16" height="3" viewBox="0 0 16 3"><circle cx="1.5" cy="1.5" r="1.3" fill="#f0d48a"/><circle cx="12.8" cy="1.5" r="1.3" fill="#f0d48a"/></svg>
<svg class="a" style="left:294px;top:68px;" width="7" height="7" viewBox="0 0 7 7"><path d="M0.5 6.5l5.5-5.5" stroke="#f4e0a0" stroke-width="1.1"/></svg>
<div class="a" style="left:330px;top:67px;width:4px;height:9px;background:#9a44c4;border-radius:1px;"></div>
<div class="a" style="left:221px;top:77px;width:118px;height:11px;background:#474747;"></div>
<div class="a" style="left:221px;top:87px;width:118px;height:1px;background:#424242;"></div>
<svg class="a" style="left:236px;top:79px;" width="8" height="8" viewBox="0 0 8 8"><path d="M0.5 0.5h7v7.5h-4.5l-3-3z" fill="#d8d8d8"/><path d="M0.5 5h3v3" fill="none" stroke="#888" stroke-width="0.6"/></svg>
<div class="t" style="top:78.85px;font-size:7.5px;line-height:7.5px;color:#d6d6d6;left:246px;">bunny-han...</div>
<svg class="a" style="left:308px;top:81.6px;" width="16" height="3" viewBox="0 0 16 3"><circle cx="1.5" cy="1.5" r="1.3" fill="#151515"/><circle cx="12.8" cy="1.5" r="1.3" fill="#151515"/></svg>
<div class="a" style="left:330px;top:78px;width:4px;height:9px;background:#9a4cc8;border-radius:1px;"></div>
<div class="a" style="left:221px;top:88px;width:118px;height:11px;background:#474747;"></div>
<div class="a" style="left:221px;top:98px;width:118px;height:1px;background:#424242;"></div>
<svg class="a" style="left:236px;top:90px;" width="8" height="8" viewBox="0 0 8 8"><path d="M0.5 0.5h7v7.5h-4.5l-3-3z" fill="#d8d8d8"/><path d="M0.5 5h3v3" fill="none" stroke="#888" stroke-width="0.6"/></svg>
<div class="t" style="top:89.85px;font-size:7.5px;line-height:7.5px;color:#d6d6d6;left:246px;">bunny-arm...</div>
<svg class="a" style="left:308px;top:92.6px;" width="16" height="3" viewBox="0 0 16 3"><circle cx="1.5" cy="1.5" r="1.3" fill="#151515"/><circle cx="12.8" cy="1.5" r="1.3" fill="#151515"/></svg>
<div class="a" style="left:330px;top:89px;width:4px;height:9px;background:#44cc44;border-radius:1px;"></div>
<div class="a" style="left:221px;top:99px;width:118px;height:11px;background:#474747;"></div>
<div class="a" style="left:221px;top:109px;width:118px;height:1px;background:#424242;"></div>
<svg class="a" style="left:236px;top:101px;" width="8" height="8" viewBox="0 0 8 8"><path d="M0.5 0.5h7v7.5h-4.5l-3-3z" fill="#d8d8d8"/><path d="M0.5 5h3v3" fill="none" stroke="#888" stroke-width="0.6"/></svg>
<div class="t" style="top:100.85px;font-size:7.5px;line-height:7.5px;color:#d6d6d6;left:246px;">bunny-hea...</div>
<svg class="a" style="left:308px;top:103.6px;" width="16" height="3" viewBox="0 0 16 3"><circle cx="1.5" cy="1.5" r="1.3" fill="#151515"/><circle cx="12.8" cy="1.5" r="1.3" fill="#151515"/></svg>
<div class="a" style="left:330px;top:100px;width:4px;height:9px;background:#44cc44;border-radius:1px;"></div>
<div class="a" style="left:221px;top:110px;width:118px;height:11px;background:#474747;"></div>
<div class="a" style="left:221px;top:120px;width:118px;height:1px;background:#424242;"></div>
<svg class="a" style="left:236px;top:112px;" width="8" height="8" viewBox="0 0 8 8"><path d="M0.5 0.5h7v7.5h-4.5l-3-3z" fill="#d8d8d8"/><path d="M0.5 5h3v3" fill="none" stroke="#888" stroke-width="0.6"/></svg>
<div class="t" style="top:111.85px;font-size:7.5px;line-height:7.5px;color:#d6d6d6;left:246px;">bunny-arm...</div>
<svg class="a" style="left:308px;top:114.6px;" width="16" height="3" viewBox="0 0 16 3"><circle cx="1.5" cy="1.5" r="1.3" fill="#151515"/><circle cx="12.8" cy="1.5" r="1.3" fill="#151515"/></svg>
<div class="a" style="left:330px;top:111px;width:4px;height:9px;background:#e08a30;border-radius:1px;"></div>
<div class="a" style="left:221px;top:121px;width:118px;height:11px;background:#474747;"></div>
<div class="a" style="left:221px;top:131px;width:118px;height:1px;background:#424242;"></div>
<svg class="a" style="left:236px;top:123px;" width="8" height="8" viewBox="0 0 8 8"><path d="M0.5 0.5h7v7.5h-4.5l-3-3z" fill="#d8d8d8"/><path d="M0.5 5h3v3" fill="none" stroke="#888" stroke-width="0.6"/></svg>
<div class="t" style="top:122.85px;font-size:7.5px;line-height:7.5px;color:#d6d6d6;left:246px;">bunny-bod...</div>
<svg class="a" style="left:308px;top:125.6px;" width="16" height="3" viewBox="0 0 16 3"><circle cx="1.5" cy="1.5" r="1.3" fill="#151515"/><circle cx="12.8" cy="1.5" r="1.3" fill="#151515"/></svg>
<div class="a" style="left:330px;top:122px;width:4px;height:9px;background:#d44ed4;border-radius:1px;"></div>
<div class="a" style="left:221px;top:132px;width:118px;height:11px;background:#474747;"></div>
<div class="a" style="left:221px;top:142px;width:118px;height:1px;background:#424242;"></div>
<svg class="a" style="left:236px;top:134px;" width="8" height="8" viewBox="0 0 8 8"><path d="M0.5 0.5h7v7.5h-4.5l-3-3z" fill="#d8d8d8"/><path d="M0.5 5h3v3" fill="none" stroke="#888" stroke-width="0.6"/></svg>
<div class="t" style="top:133.85px;font-size:7.5px;line-height:7.5px;color:#d6d6d6;left:246px;">bunny-hea...</div>
<svg class="a" style="left:308px;top:136.6px;" width="16" height="3" viewBox="0 0 16 3"><circle cx="1.5" cy="1.5" r="1.3" fill="#151515"/><circle cx="12.8" cy="1.5" r="1.3" fill="#151515"/></svg>
<div class="a" style="left:330px;top:133px;width:4px;height:9px;background:#4ccc4c;border-radius:1px;"></div>
<div class="a" style="left:221px;top:143px;width:118px;height:11px;background:#474747;"></div>
<div class="a" style="left:221px;top:153px;width:118px;height:1px;background:#424242;"></div>
<svg class="a" style="left:236px;top:145px;" width="8" height="8" viewBox="0 0 8 8"><path d="M0.5 0.5h7v7.5h-4.5l-3-3z" fill="#d8d8d8"/><path d="M0.5 5h3v3" fill="none" stroke="#888" stroke-width="0.6"/></svg>
<div class="t" style="top:144.85px;font-size:7.5px;line-height:7.5px;color:#d6d6d6;left:246px;">bunny-foo...</div>
<svg class="a" style="left:308px;top:147.6px;" width="16" height="3" viewBox="0 0 16 3"><circle cx="1.5" cy="1.5" r="1.3" fill="#151515"/><circle cx="12.8" cy="1.5" r="1.3" fill="#151515"/></svg>
<div class="a" style="left:330px;top:144px;width:4px;height:9px;background:#44d4d4;border-radius:1px;"></div>
<div class="a" style="left:339px;top:66px;width:462px;height:88px;background:#4f4f4f;"></div>
<div class="a" style="left:339px;top:66px;width:462px;height:11px;background:#4e4e4e;"></div>
<div class="a" style="left:339px;top:66px;width:462px;height:1px;background:#606060;"></div>
<div class="t" style="top:69.25px;font-size:7.5px;line-height:7.5px;color:#dadada;left:343px;">idle</div>
<div class="a" style="left:642.8px;top:69px;width:6px;height:7px;background:#c83a3a;"></div>
<svg class="a" style="left:637.9000000000001px;top:70px;" width="5" height="6" viewBox="0 0 5 6"><rect x="0.5" y="0.5" width="3" height="5" fill="none" stroke="#222" stroke-width="0.8"/></svg>
<div class="t" style="top:69.25px;font-size:7.5px;line-height:7.5px;color:#e8e8e8;left:650.7px;">punch</div>
<div class="a" style="left:339.0px;top:77px;width:462.0px;height:10px;background:#7373a3;"></div>
<div class="a" style="left:339.0px;top:77px;width:462.0px;height:1.5px;background:#9494be;"></div>
<svg class="a" style="left:339px;top:77px;overflow:hidden;" width="462" height="11" viewBox="0 0 462 11"><rect x="0.0" y="0" width="0.8" height="10" fill="#a0a0c8"/><circle cx="2.4" cy="7" r="1.8" fill="#0c0c20"/><path d="M4.9 7.3H37.7" stroke="#2c2c5a" stroke-width="0.9"/><path d="M35.2 6L37.7 7.3L35.2 8.6" fill="none" stroke="#2c2c5a" stroke-width="0.7"/><rect x="39.2" y="0" width="0.8" height="10" fill="#a0a0c8"/><circle cx="41.6" cy="7" r="1.8" fill="#0c0c20"/><path d="M44.1 7.3H72.0" stroke="#2c2c5a" stroke-width="0.9"/><path d="M69.5 6L72.0 7.3L69.5 8.6" fill="none" stroke="#2c2c5a" stroke-width="0.7"/><rect x="73.5" y="0" width="0.8" height="10" fill="#a0a0c8"/><circle cx="75.9" cy="7" r="1.8" fill="#0c0c20"/><path d="M78.4 7.3H111.2" stroke="#2c2c5a" stroke-width="0.9"/><path d="M108.7 6L111.2 7.3L108.7 8.6" fill="none" stroke="#2c2c5a" stroke-width="0.7"/><rect x="112.7" y="0" width="0.8" height="10" fill="#a0a0c8"/><circle cx="115.1" cy="7" r="1.8" fill="#0c0c20"/><path d="M117.6 7.3H150.4" stroke="#2c2c5a" stroke-width="0.9"/><path d="M147.9 6L150.4 7.3L147.9 8.6" fill="none" stroke="#2c2c5a" stroke-width="0.7"/><rect x="151.9" y="0" width="0.8" height="10" fill="#a0a0c8"/><circle cx="154.3" cy="7" r="1.8" fill="#0c0c20"/><path d="M156.8 7.3H189.6" stroke="#2c2c5a" stroke-width="0.9"/><path d="M187.1 6L189.6 7.3L187.1 8.6" fill="none" stroke="#2c2c5a" stroke-width="0.7"/><rect x="191.1" y="0" width="0.8" height="10" fill="#a0a0c8"/><circle cx="193.6" cy="7" r="1.8" fill="#0c0c20"/><path d="M196.1 7.3H223.9" stroke="#2c2c5a" stroke-width="0.9"/><path d="M221.4 6L223.9 7.3L221.4 8.6" fill="none" stroke="#2c2c5a" stroke-width="0.7"/><rect x="225.4" y="0" width="0.8" height="10" fill="#a0a0c8"/><circle cx="227.9" cy="7" r="1.8" fill="#0c0c20"/><path d="M230.4 7.3H263.1" stroke="#2c2c5a" stroke-width="0.9"/><path d="M260.6 6L263.1 7.3L260.6 8.6" fill="none" stroke="#2c2c5a" stroke-width="0.7"/><rect x="264.6" y="0" width="0.8" height="10" fill="#a0a0c8"/><circle cx="267.1" cy="7" r="1.8" fill="#0c0c20"/><path d="M269.6 7.3H302.3" stroke="#2c2c5a" stroke-width="0.9"/><path d="M299.8 6L302.3 7.3L299.8 8.6" fill="none" stroke="#2c2c5a" stroke-width="0.7"/><rect x="303.8" y="0" width="0.8" height="10" fill="#a0a0c8"/><circle cx="306.2" cy="7" r="1.8" fill="#0c0c20"/><rect x="308.7" y="0" width="0.8" height="10" fill="#a0a0c8"/><circle cx="311.2" cy="7" r="1.8" fill="#0c0c20"/><path d="M313.7 7.3H341.5" stroke="#2c2c5a" stroke-width="0.9"/><path d="M339.0 6L341.5 7.3L339.0 8.6" fill="none" stroke="#2c2c5a" stroke-width="0.7"/><rect x="343.0" y="0" width="0.8" height="10" fill="#a0a0c8"/><circle cx="345.5" cy="7" r="1.8" fill="#0c0c20"/><rect x="347.9" y="0" width="0.8" height="10" fill="#a0a0c8"/><circle cx="350.4" cy="7" r="1.8" fill="#0c0c20"/><rect x="352.8" y="0" width="0.8" height="10" fill="#a0a0c8"/><circle cx="355.2" cy="7" r="1.8" fill="#0c0c20"/><rect x="357.7" y="0" width="0.8" height="10" fill="#a0a0c8"/><circle cx="360.2" cy="7" r="1.8" fill="#0c0c20"/><path d="M362.7 7.3H415.0" stroke="#2c2c5a" stroke-width="0.9"/><path d="M412.5 6L415.0 7.3L412.5 8.6" fill="none" stroke="#2c2c5a" stroke-width="0.7"/><rect x="416.5" y="0" width="0.8" height="10" fill="#a0a0c8"/><circle cx="419.0" cy="7" r="1.8" fill="#0c0c20"/><rect x="426.3" y="0" width="0.8" height="10" fill="#a0a0c8"/><circle cx="428.8" cy="7" r="1.8" fill="#0c0c20"/><rect x="431.2" y="0" width="0.8" height="10" fill="#a0a0c8"/><circle cx="433.7" cy="7" r="1.8" fill="#0c0c20"/><rect x="436.1" y="0" width="0.8" height="10" fill="#a0a0c8"/><circle cx="438.6" cy="7" r="1.8" fill="#0c0c20"/><rect x="441.0" y="0" width="0.8" height="10" fill="#a0a0c8"/><circle cx="443.5" cy="7" r="1.8" fill="#0c0c20"/><rect x="445.9" y="0" width="0.8" height="10" fill="#a0a0c8"/><circle cx="448.4" cy="7" r="1.8" fill="#0c0c20"/><rect x="450.8" y="0" width="0.8" height="10" fill="#a0a0c8"/><circle cx="453.2" cy="7" r="1.8" fill="#0c0c20"/><rect x="460.6" y="0" width="0.8" height="10" fill="#a0a0c8"/><circle cx="463.1" cy="7" r="1.8" fill="#0c0c20"/></svg>
<svg class="a" style="left:339px;top:88px;overflow:hidden;" width="462" height="11" viewBox="0 0 462 11"><rect x="69.1" y="4.5" width="2.6" height="5" fill="none" stroke="#1a1a1a" stroke-width="0.8"/><circle cx="74.1" cy="7" r="1.4" fill="none" stroke="#333" stroke-width="0.6"/><rect x="147.5" y="4.5" width="2.6" height="5" fill="none" stroke="#1a1a1a" stroke-width="0.8"/><circle cx="152.5" cy="7" r="1.4" fill="none" stroke="#333" stroke-width="0.6"/><rect x="221.0" y="4.5" width="2.6" height="5" fill="none" stroke="#1a1a1a" stroke-width="0.8"/><circle cx="226.0" cy="7" r="1.4" fill="none" stroke="#333" stroke-width="0.6"/><rect x="299.4" y="4.5" width="2.6" height="5" fill="none" stroke="#1a1a1a" stroke-width="0.8"/><circle cx="304.4" cy="7" r="1.4" fill="none" stroke="#333" stroke-width="0.6"/><rect x="304.3" y="4.5" width="2.6" height="5" fill="none" stroke="#1a1a1a" stroke-width="0.8"/><circle cx="309.3" cy="7" r="1.4" fill="none" stroke="#333" stroke-width="0.6"/><rect x="338.6" y="4.5" width="2.6" height="5" fill="none" stroke="#1a1a1a" stroke-width="0.8"/><circle cx="343.6" cy="7" r="1.4" fill="none" stroke="#333" stroke-width="0.6"/><rect x="407.2" y="4.5" width="2.6" height="5" fill="none" stroke="#1a1a1a" stroke-width="0.8"/><circle cx="412.2" cy="7" r="1.4" fill="none" stroke="#333" stroke-width="0.6"/><rect x="412.1" y="4.5" width="2.6" height="5" fill="none" stroke="#1a1a1a" stroke-width="0.8"/><circle cx="417.1" cy="7" r="1.4" fill="none" stroke="#333" stroke-width="0.6"/><rect x="421.9" y="4.5" width="2.6" height="5" fill="none" stroke="#1a1a1a" stroke-width="0.8"/><circle cx="426.9" cy="7" r="1.4" fill="none" stroke="#333" stroke-width="0.6"/><rect x="426.8" y="4.5" width="2.6" height="5" fill="none" stroke="#1a1a1a" stroke-width="0.8"/><circle cx="431.8" cy="7" r="1.4" fill="none" stroke="#333" stroke-width="0.6"/><rect x="431.7" y="4.5" width="2.6" height="5" fill="none" stroke="#1a1a1a" stroke-width="0.8"/><circle cx="436.7" cy="7" r="1.4" fill="none" stroke="#333" stroke-width="0.6"/><rect x="436.6" y="4.5" width="2.6" height="5" fill="none" stroke="#1a1a1a" stroke-width="0.8"/><circle cx="441.6" cy="7" r="1.4" fill="none" stroke="#333" stroke-width="0.6"/><rect x="441.5" y="4.5" width="2.6" height="5" fill="none" stroke="#1a1a1a" stroke-width="0.8"/><circle cx="446.5" cy="7" r="1.4" fill="none" stroke="#333" stroke-width="0.6"/><rect x="446.4" y="4.5" width="2.6" height="5" fill="none" stroke="#1a1a1a" stroke-width="0.8"/><circle cx="451.4" cy="7" r="1.4" fill="none" stroke="#333" stroke-width="0.6"/></svg>
<div class="a" style="left:339.0px;top:99px;width:357.7px;height:10px;background:#7373a3;"></div>
<div class="a" style="left:339.0px;top:99px;width:357.7px;height:1.5px;background:#9494be;"></div>
<div class="a" style="left:765.3px;top:99px;width:35.7px;height:10px;background:#7373a3;"></div>
<div class="a" style="left:765.3px;top:99px;width:35.7px;height:1.5px;background:#9494be;"></div>
<svg class="a" style="left:339px;top:99px;overflow:hidden;" width="462" height="11" viewBox="0 0 462 11"><rect x="0.0" y="0" width="0.8" height="10" fill="#a0a0c8"/><circle cx="2.4" cy="7" r="1.8" fill="#0c0c20"/><path d="M4.9 7.3H72.0" stroke="#2c2c5a" stroke-width="0.9"/><path d="M69.5 6L72.0 7.3L69.5 8.6" fill="none" stroke="#2c2c5a" stroke-width="0.7"/><rect x="73.5" y="0" width="0.8" height="10" fill="#a0a0c8"/><circle cx="75.9" cy="7" r="1.8" fill="#0c0c20"/><path d="M78.4 7.3H150.4" stroke="#2c2c5a" stroke-width="0.9"/><path d="M147.9 6L150.4 7.3L147.9 8.6" fill="none" stroke="#2c2c5a" stroke-width="0.7"/><rect x="151.9" y="0" width="0.8" height="10" fill="#a0a0c8"/><circle cx="154.3" cy="7" r="1.8" fill="#0c0c20"/><path d="M156.8 7.3H223.9" stroke="#2c2c5a" stroke-width="0.9"/><path d="M221.4 6L223.9 7.3L221.4 8.6" fill="none" stroke="#2c2c5a" stroke-width="0.7"/><rect x="225.4" y="0" width="0.8" height="10" fill="#a0a0c8"/><circle cx="227.9" cy="7" r="1.8" fill="#0c0c20"/><path d="M230.4 7.3H302.3" stroke="#2c2c5a" stroke-width="0.9"/><path d="M299.8 6L302.3 7.3L299.8 8.6" fill="none" stroke="#2c2c5a" stroke-width="0.7"/><rect x="303.8" y="0" width="0.8" height="10" fill="#a0a0c8"/><circle cx="306.2" cy="7" r="1.8" fill="#0c0c20"/><rect x="308.7" y="0" width="0.8" height="10" fill="#a0a0c8"/><circle cx="311.2" cy="7" r="1.8" fill="#0c0c20"/><path d="M313.7 7.3H341.5" stroke="#2c2c5a" stroke-width="0.9"/><path d="M339.0 6L341.5 7.3L339.0 8.6" fill="none" stroke="#2c2c5a" stroke-width="0.7"/><rect x="343.0" y="0" width="0.8" height="10" fill="#a0a0c8"/><circle cx="345.5" cy="7" r="1.8" fill="#0c0c20"/><rect x="347.9" y="0" width="0.8" height="10" fill="#a0a0c8"/><circle cx="350.4" cy="7" r="1.8" fill="#0c0c20"/><rect x="352.8" y="0" width="0.8" height="10" fill="#a0a0c8"/><circle cx="355.2" cy="7" r="1.8" fill="#0c0c20"/><rect x="431.2" y="0" width="0.8" height="10" fill="#a0a0c8"/><circle cx="433.7" cy="7" r="1.8" fill="#0c0c20"/><rect x="436.1" y="0" width="0.8" height="10" fill="#a0a0c8"/><circle cx="438.6" cy="7" r="1.8" fill="#0c0c20"/><rect x="441.0" y="0" width="0.8" height="10" fill="#a0a0c8"/><circle cx="443.5" cy="7" r="1.8" fill="#0c0c20"/><rect x="450.8" y="0" width="0.8" height="10" fill="#a0a0c8"/><circle cx="453.2" cy="7" r="1.8" fill="#0c0c20"/><rect x="460.6" y="0" width="0.8" height="10" fill="#a0a0c8"/><circle cx="463.1" cy="7" r="1.8" fill="#0c0c20"/><rect x="407.2" y="4.5" width="2.6" height="5" fill="none" stroke="#1a1a1a" stroke-width="0.8"/><circle cx="412.2" cy="7" r="1.4" fill="none" stroke="#333" stroke-width="0.6"/><rect x="421.9" y="4.5" width="2.6" height="5" fill="none" stroke="#1a1a1a" stroke-width="0.8"/><circle cx="426.9" cy="7" r="1.4" fill="none" stroke="#333" stroke-width="0.6"/></svg>
<div class="a" style="left:339.0px;top:110px;width:462.0px;height:10px;background:#7373a3;"></div>
<div class="a" style="left:339.0px;top:110px;width:462.0px;height:1.5px;background:#9494be;"></div>
<svg class="a" style="left:339px;top:110px;overflow:hidden;" width="462" height="11" viewBox="0 0 462 11"><rect x="0.0" y="0" width="0.8" height="10" fill="#a0a0c8"/><circle cx="2.4" cy="7" r="1.8" fill="#0c0c20"/><path d="M4.9 7.3H37.7" stroke="#2c2c5a" stroke-width="0.9"/><path d="M35.2 6L37.7 7.3L35.2 8.6" fill="none" stroke="#2c2c5a" stroke-width="0.7"/><rect x="39.2" y="0" width="0.8" height="10" fill="#a0a0c8"/><circle cx="41.6" cy="7" r="1.8" fill="#0c0c20"/><path d="M44.1 7.3H72.0" stroke="#2c2c5a" stroke-width="0.9"/><path d="M69.5 6L72.0 7.3L69.5 8.6" fill="none" stroke="#2c2c5a" stroke-width="0.7"/><rect x="73.5" y="0" width="0.8" height="10" fill="#a0a0c8"/><circle cx="75.9" cy="7" r="1.8" fill="#0c0c20"/><path d="M78.4 7.3H111.2" stroke="#2c2c5a" stroke-width="0.9"/><path d="M108.7 6L111.2 7.3L108.7 8.6" fill="none" stroke="#2c2c5a" stroke-width="0.7"/><rect x="112.7" y="0" width="0.8" height="10" fill="#a0a0c8"/><circle cx="115.1" cy="7" r="1.8" fill="#0c0c20"/><path d="M117.6 7.3H150.4" stroke="#2c2c5a" stroke-width="0.9"/><path d="M147.9 6L150.4 7.3L147.9 8.6" fill="none" stroke="#2c2c5a" stroke-width="0.7"/><rect x="151.9" y="0" width="0.8" height="10" fill="#a0a0c8"/><circle cx="154.3" cy="7" r="1.8" fill="#0c0c20"/><path d="M156.8 7.3H189.6" stroke="#2c2c5a" stroke-width="0.9"/><path d="M187.1 6L189.6 7.3L187.1 8.6" fill="none" stroke="#2c2c5a" stroke-width="0.7"/><rect x="191.1" y="0" width="0.8" height="10" fill="#a0a0c8"/><circle cx="193.6" cy="7" r="1.8" fill="#0c0c20"/><path d="M196.1 7.3H223.9" stroke="#2c2c5a" stroke-width="0.9"/><path d="M221.4 6L223.9 7.3L221.4 8.6" fill="none" stroke="#2c2c5a" stroke-width="0.7"/><rect x="225.4" y="0" width="0.8" height="10" fill="#a0a0c8"/><circle cx="227.9" cy="7" r="1.8" fill="#0c0c20"/><path d="M230.4 7.3H263.1" stroke="#2c2c5a" stroke-width="0.9"/><path d="M260.6 6L263.1 7.3L260.6 8.6" fill="none" stroke="#2c2c5a" stroke-width="0.7"/><rect x="264.6" y="0" width="0.8" height="10" fill="#a0a0c8"/><circle cx="267.1" cy="7" r="1.8" fill="#0c0c20"/><path d="M269.6 7.3H302.3" stroke="#2c2c5a" stroke-width="0.9"/><path d="M299.8 6L302.3 7.3L299.8 8.6" fill="none" stroke="#2c2c5a" stroke-width="0.7"/><rect x="303.8" y="0" width="0.8" height="10" fill="#a0a0c8"/><circle cx="306.2" cy="7" r="1.8" fill="#0c0c20"/><rect x="308.7" y="0" width="0.8" height="10" fill="#a0a0c8"/><circle cx="311.2" cy="7" r="1.8" fill="#0c0c20"/><path d="M313.7 7.3H341.5" stroke="#2c2c5a" stroke-width="0.9"/><path d="M339.0 6L341.5 7.3L339.0 8.6" fill="none" stroke="#2c2c5a" stroke-width="0.7"/><rect x="343.0" y="0" width="0.8" height="10" fill="#a0a0c8"/><circle cx="345.5" cy="7" r="1.8" fill="#0c0c20"/><rect x="347.9" y="0" width="0.8" height="10" fill="#a0a0c8"/><circle cx="350.4" cy="7" r="1.8" fill="#0c0c20"/><rect x="352.8" y="0" width="0.8" height="10" fill="#a0a0c8"/><circle cx="355.2" cy="7" r="1.8" fill="#0c0c20"/><rect x="357.7" y="0" width="0.8" height="10" fill="#a0a0c8"/><circle cx="360.2" cy="7" r="1.8" fill="#0c0c20"/><path d="M362.7 7.3H415.0" stroke="#2c2c5a" stroke-width="0.9"/><path d="M412.5 6L415.0 7.3L412.5 8.6" fill="none" stroke="#2c2c5a" stroke-width="0.7"/><rect x="416.5" y="0" width="0.8" height="10" fill="#a0a0c8"/><circle cx="419.0" cy="7" r="1.8" fill="#0c0c20"/><rect x="426.3" y="0" width="0.8" height="10" fill="#a0a0c8"/><circle cx="428.8" cy="7" r="1.8" fill="#0c0c20"/><rect x="431.2" y="0" width="0.8" height="10" fill="#a0a0c8"/><circle cx="433.7" cy="7" r="1.8" fill="#0c0c20"/><rect x="436.1" y="0" width="0.8" height="10" fill="#a0a0c8"/><circle cx="438.6" cy="7" r="1.8" fill="#0c0c20"/><rect x="441.0" y="0" width="0.8" height="10" fill="#a0a0c8"/><circle cx="443.5" cy="7" r="1.8" fill="#0c0c20"/><rect x="445.9" y="0" width="0.8" height="10" fill="#a0a0c8"/><circle cx="448.4" cy="7" r="1.8" fill="#0c0c20"/><rect x="450.8" y="0" width="0.8" height="10" fill="#a0a0c8"/><circle cx="453.2" cy="7" r="1.8" fill="#0c0c20"/><rect x="460.6" y="0" width="0.8" height="10" fill="#a0a0c8"/><circle cx="463.1" cy="7" r="1.8" fill="#0c0c20"/></svg>
<div class="a" style="left:339.0px;top:121px;width:462.0px;height:10px;background:#7373a3;"></div>
<div class="a" style="left:339.0px;top:121px;width:462.0px;height:1.5px;background:#9494be;"></div>
<svg class="a" style="left:339px;top:121px;overflow:hidden;" width="462" height="11" viewBox="0 0 462 11"><rect x="0.0" y="0" width="0.8" height="10" fill="#a0a0c8"/><circle cx="2.4" cy="7" r="1.8" fill="#0c0c20"/><path d="M4.9 7.3H72.0" stroke="#2c2c5a" stroke-width="0.9"/><path d="M69.5 6L72.0 7.3L69.5 8.6" fill="none" stroke="#2c2c5a" stroke-width="0.7"/><rect x="73.5" y="0" width="0.8" height="10" fill="#a0a0c8"/><circle cx="75.9" cy="7" r="1.8" fill="#0c0c20"/><path d="M78.4 7.3H150.4" stroke="#2c2c5a" stroke-width="0.9"/><path d="M147.9 6L150.4 7.3L147.9 8.6" fill="none" stroke="#2c2c5a" stroke-width="0.7"/><rect x="151.9" y="0" width="0.8" height="10" fill="#a0a0c8"/><circle cx="154.3" cy="7" r="1.8" fill="#0c0c20"/><path d="M156.8 7.3H223.9" stroke="#2c2c5a" stroke-width="0.9"/><path d="M221.4 6L223.9 7.3L221.4 8.6" fill="none" stroke="#2c2c5a" stroke-width="0.7"/><rect x="225.4" y="0" width="0.8" height="10" fill="#a0a0c8"/><circle cx="227.9" cy="7" r="1.8" fill="#0c0c20"/><path d="M230.4 7.3H302.3" stroke="#2c2c5a" stroke-width="0.9"/><path d="M299.8 6L302.3 7.3L299.8 8.6" fill="none" stroke="#2c2c5a" stroke-width="0.7"/><rect x="303.8" y="0" width="0.8" height="10" fill="#a0a0c8"/><circle cx="306.2" cy="7" r="1.8" fill="#0c0c20"/><rect x="308.7" y="0" width="0.8" height="10" fill="#a0a0c8"/><circle cx="311.2" cy="7" r="1.8" fill="#0c0c20"/><path d="M313.7 7.3H341.5" stroke="#2c2c5a" stroke-width="0.9"/><path d="M339.0 6L341.5 7.3L339.0 8.6" fill="none" stroke="#2c2c5a" stroke-width="0.7"/><rect x="343.0" y="0" width="0.8" height="10" fill="#a0a0c8"/><circle cx="345.5" cy="7" r="1.8" fill="#0c0c20"/><rect x="347.9" y="0" width="0.8" height="10" fill="#a0a0c8"/><circle cx="350.4" cy="7" r="1.8" fill="#0c0c20"/><rect x="352.8" y="0" width="0.8" height="10" fill="#a0a0c8"/><circle cx="355.2" cy="7" r="1.8" fill="#0c0c20"/><rect x="357.7" y="0" width="0.8" height="10" fill="#a0a0c8"/><circle cx="360.2" cy="7" r="1.8" fill="#0c0c20"/><path d="M362.7 7.3H415.0" stroke="#2c2c5a" stroke-width="0.9"/><path d="M412.5 6L415.0 7.3L412.5 8.6" fill="none" stroke="#2c2c5a" stroke-width="0.7"/><rect x="416.5" y="0" width="0.8" height="10" fill="#a0a0c8"/><circle cx="419.0" cy="7" r="1.8" fill="#0c0c20"/><rect x="426.3" y="0" width="0.8" height="10" fill="#a0a0c8"/><circle cx="428.8" cy="7" r="1.8" fill="#0c0c20"/><rect x="431.2" y="0" width="0.8" height="10" fill="#a0a0c8"/><circle cx="433.7" cy="7" r="1.8" fill="#0c0c20"/><rect x="436.1" y="0" width="0.8" height="10" fill="#a0a0c8"/><circle cx="438.6" cy="7" r="1.8" fill="#0c0c20"/><rect x="441.0" y="0" width="0.8" height="10" fill="#a0a0c8"/><circle cx="443.5" cy="7" r="1.8" fill="#0c0c20"/><rect x="445.9" y="0" width="0.8" height="10" fill="#a0a0c8"/><circle cx="448.4" cy="7" r="1.8" fill="#0c0c20"/><rect x="450.8" y="0" width="0.8" height="10" fill="#a0a0c8"/><circle cx="453.2" cy="7" r="1.8" fill="#0c0c20"/><rect x="460.6" y="0" width="0.8" height="10" fill="#a0a0c8"/><circle cx="463.1" cy="7" r="1.8" fill="#0c0c20"/></svg>
<div class="a" style="left:696.7px;top:132px;width:68.6px;height:10px;background:#7373a3;"></div>
<div class="a" style="left:696.7px;top:132px;width:68.6px;height:1.5px;background:#9494be;"></div>
<svg class="a" style="left:339px;top:132px;overflow:hidden;" width="462" height="11" viewBox="0 0 462 11"><rect x="357.7" y="0" width="0.8" height="10" fill="#a0a0c8"/><circle cx="360.2" cy="7" r="1.8" fill="#0c0c20"/><path d="M362.7 7.3H415.0" stroke="#2c2c5a" stroke-width="0.9"/><path d="M412.5 6L415.0 7.3L412.5 8.6" fill="none" stroke="#2c2c5a" stroke-width="0.7"/><rect x="416.5" y="0" width="0.8" height="10" fill="#a0a0c8"/><circle cx="419.0" cy="7" r="1.8" fill="#0c0c20"/><rect x="426.3" y="0" width="0.8" height="10" fill="#a0a0c8"/><circle cx="428.8" cy="7" r="1.8" fill="#0c0c20"/><rect x="69.1" y="4.5" width="2.6" height="5" fill="none" stroke="#1a1a1a" stroke-width="0.8"/><circle cx="74.1" cy="7" r="1.4" fill="none" stroke="#333" stroke-width="0.6"/><rect x="147.5" y="4.5" width="2.6" height="5" fill="none" stroke="#1a1a1a" stroke-width="0.8"/><circle cx="152.5" cy="7" r="1.4" fill="none" stroke="#333" stroke-width="0.6"/><rect x="221.0" y="4.5" width="2.6" height="5" fill="none" stroke="#1a1a1a" stroke-width="0.8"/><circle cx="226.0" cy="7" r="1.4" fill="none" stroke="#333" stroke-width="0.6"/><rect x="299.4" y="4.5" width="2.6" height="5" fill="none" stroke="#1a1a1a" stroke-width="0.8"/><circle cx="304.4" cy="7" r="1.4" fill="none" stroke="#333" stroke-width="0.6"/><rect x="304.3" y="4.5" width="2.6" height="5" fill="none" stroke="#1a1a1a" stroke-width="0.8"/><circle cx="309.3" cy="7" r="1.4" fill="none" stroke="#333" stroke-width="0.6"/><rect x="338.6" y="4.5" width="2.6" height="5" fill="none" stroke="#1a1a1a" stroke-width="0.8"/><circle cx="343.6" cy="7" r="1.4" fill="none" stroke="#333" stroke-width="0.6"/><rect x="343.5" y="4.5" width="2.6" height="5" fill="none" stroke="#1a1a1a" stroke-width="0.8"/><circle cx="348.5" cy="7" r="1.4" fill="none" stroke="#333" stroke-width="0.6"/><rect x="348.4" y="4.5" width="2.6" height="5" fill="none" stroke="#1a1a1a" stroke-width="0.8"/><circle cx="353.4" cy="7" r="1.4" fill="none" stroke="#333" stroke-width="0.6"/><rect x="431.7" y="4.5" width="2.6" height="5" fill="none" stroke="#1a1a1a" stroke-width="0.8"/><circle cx="436.7" cy="7" r="1.4" fill="none" stroke="#333" stroke-width="0.6"/><rect x="436.6" y="4.5" width="2.6" height="5" fill="none" stroke="#1a1a1a" stroke-width="0.8"/><circle cx="441.6" cy="7" r="1.4" fill="none" stroke="#333" stroke-width="0.6"/><rect x="441.5" y="4.5" width="2.6" height="5" fill="none" stroke="#1a1a1a" stroke-width="0.8"/><circle cx="446.5" cy="7" r="1.4" fill="none" stroke="#333" stroke-width="0.6"/><rect x="446.4" y="4.5" width="2.6" height="5" fill="none" stroke="#1a1a1a" stroke-width="0.8"/><circle cx="451.4" cy="7" r="1.4" fill="none" stroke="#333" stroke-width="0.6"/></svg>
<div class="a" style="left:339.0px;top:143px;width:462.0px;height:10px;background:#7373a3;"></div>
<div class="a" style="left:339.0px;top:143px;width:462.0px;height:1.5px;background:#9494be;"></div>
<svg class="a" style="left:339px;top:143px;overflow:hidden;" width="462" height="11" viewBox="0 0 462 11"><rect x="0.0" y="0" width="0.8" height="10" fill="#a0a0c8"/><circle cx="2.4" cy="7" r="1.8" fill="#0c0c20"/><path d="M4.9 7.3H72.0" stroke="#2c2c5a" stroke-width="0.9"/><path d="M69.5 6L72.0 7.3L69.5 8.6" fill="none" stroke="#2c2c5a" stroke-width="0.7"/><rect x="73.5" y="0" width="0.8" height="10" fill="#a0a0c8"/><circle cx="75.9" cy="7" r="1.8" fill="#0c0c20"/><path d="M78.4 7.3H150.4" stroke="#2c2c5a" stroke-width="0.9"/><path d="M147.9 6L150.4 7.3L147.9 8.6" fill="none" stroke="#2c2c5a" stroke-width="0.7"/><rect x="151.9" y="0" width="0.8" height="10" fill="#a0a0c8"/><circle cx="154.3" cy="7" r="1.8" fill="#0c0c20"/><path d="M156.8 7.3H223.9" stroke="#2c2c5a" stroke-width="0.9"/><path d="M221.4 6L223.9 7.3L221.4 8.6" fill="none" stroke="#2c2c5a" stroke-width="0.7"/><rect x="225.4" y="0" width="0.8" height="10" fill="#a0a0c8"/><circle cx="227.9" cy="7" r="1.8" fill="#0c0c20"/><path d="M230.4 7.3H302.3" stroke="#2c2c5a" stroke-width="0.9"/><path d="M299.8 6L302.3 7.3L299.8 8.6" fill="none" stroke="#2c2c5a" stroke-width="0.7"/><rect x="303.8" y="0" width="0.8" height="10" fill="#a0a0c8"/><circle cx="306.2" cy="7" r="1.8" fill="#0c0c20"/><rect x="308.7" y="0" width="0.8" height="10" fill="#a0a0c8"/><circle cx="311.2" cy="7" r="1.8" fill="#0c0c20"/><path d="M313.7 7.3H341.5" stroke="#2c2c5a" stroke-width="0.9"/><path d="M339.0 6L341.5 7.3L339.0 8.6" fill="none" stroke="#2c2c5a" stroke-width="0.7"/><rect x="343.0" y="0" width="0.8" height="10" fill="#a0a0c8"/><circle cx="345.5" cy="7" r="1.8" fill="#0c0c20"/><rect x="347.9" y="0" width="0.8" height="10" fill="#a0a0c8"/><circle cx="350.4" cy="7" r="1.8" fill="#0c0c20"/><rect x="352.8" y="0" width="0.8" height="10" fill="#a0a0c8"/><circle cx="355.2" cy="7" r="1.8" fill="#0c0c20"/><rect x="357.7" y="0" width="0.8" height="10" fill="#a0a0c8"/><circle cx="360.2" cy="7" r="1.8" fill="#0c0c20"/><path d="M362.7 7.3H415.0" stroke="#2c2c5a" stroke-width="0.9"/><path d="M412.5 6L415.0 7.3L412.5 8.6" fill="none" stroke="#2c2c5a" stroke-width="0.7"/><rect x="416.5" y="0" width="0.8" height="10" fill="#a0a0c8"/><circle cx="419.0" cy="7" r="1.8" fill="#0c0c20"/><rect x="426.3" y="0" width="0.8" height="10" fill="#a0a0c8"/><circle cx="428.8" cy="7" r="1.8" fill="#0c0c20"/><rect x="431.2" y="0" width="0.8" height="10" fill="#a0a0c8"/><circle cx="433.7" cy="7" r="1.8" fill="#0c0c20"/><rect x="436.1" y="0" width="0.8" height="10" fill="#a0a0c8"/><circle cx="438.6" cy="7" r="1.8" fill="#0c0c20"/><rect x="441.0" y="0" width="0.8" height="10" fill="#a0a0c8"/><circle cx="443.5" cy="7" r="1.8" fill="#0c0c20"/><rect x="445.9" y="0" width="0.8" height="10" fill="#a0a0c8"/><circle cx="448.4" cy="7" r="1.8" fill="#0c0c20"/><rect x="450.8" y="0" width="0.8" height="10" fill="#a0a0c8"/><circle cx="453.2" cy="7" r="1.8" fill="#0c0c20"/><rect x="460.6" y="0" width="0.8" height="10" fill="#a0a0c8"/><circle cx="463.1" cy="7" r="1.8" fill="#0c0c20"/></svg>
<div class="a" style="left:339.5px;top:65px;width:3.5px;height:89px;background:rgba(170,30,55,0.6);"></div>
<div class="a" style="left:339px;top:52px;width:5px;height:13px;background:#f49a9a;box-sizing:border-box;border:1px solid #c03a3a;"></div>
<div class="a" style="left:801px;top:66px;width:7px;height:88px;background:#3a3a3a;"></div>
<div class="a" style="left:802px;top:74px;width:5px;height:39px;background:#505050;"></div>
<svg class="a" style="left:802px;top:68px;" width="5" height="4" viewBox="0 0 5 4"><path d="M0 3.5L2.5 0.5 5 3.5z" fill="#ccc"/></svg>
<svg class="a" style="left:802px;top:147px;" width="5" height="4" viewBox="0 0 5 4"><path d="M0 0.5L2.5 3.5 5 0.5z" fill="#ccc"/></svg>
<div class="a" style="left:221px;top:154px;width:587px;height:15px;background:#3e3e3e;"></div>
<div class="a" style="left:221px;top:154px;width:587px;height:1px;background:#333;"></div>
<svg class="a" style="left:226px;top:157px;" width="36" height="10" viewBox="0 0 36 10"><rect x="3" y="1.5" width="6" height="7" fill="#b0b0b0"/><path d="M14 2.5h3.5l1 1H23v5h-9z" fill="#b0b0b0"/><path d="M26.5 2.5h7M28 3.5h4.5v5h-4.5z" fill="#b0b0b0" stroke="#b0b0b0" stroke-width="0.8"/></svg>
<div class="a" style="left:332px;top:158px;width:3px;height:8px;background:#888;"></div>
<div class="a" style="left:339px;top:155px;width:1px;height:14px;background:#555;"></div>
<svg class="a" style="left:344px;top:158px;" width="52" height="8" viewBox="0 0 52 8"><path d="M1 0.5v7" stroke="#b0b0b0"/><path d="M2 4L6 0.5v7z" fill="#b0b0b0"/><path d="M14 4l4-3.5v7z" fill="#b0b0b0"/><path d="M19.5 0.5v7" stroke="#b0b0b0"/><path d="M25 0.5l6 3.5-6 3.5z" fill="#b0b0b0"/><path d="M34.5 0.5v7" stroke="#b0b0b0"/><path d="M36 0.5l4 3.5-4 3.5z" fill="#b0b0b0"/><path d="M45 0.5l4 3.5-4 3.5z" fill="#b0b0b0"/><path d="M50.5 0.5v7" stroke="#b0b0b0"/></svg>
<div class="a" style="left:400px;top:157px;width:1px;height:10px;background:#2c2c2c;"></div>
<svg class="a" style="left:404px;top:157px;" width="24" height="10" viewBox="0 0 24 10"><path d="M0 5h3M6 5h3" stroke="#b0b0b0"/><rect x="3" y="2" width="3" height="6" fill="none" stroke="#b0b0b0" stroke-width="0.8"/><path d="M13 4h8v4h-8zM16 1.5h3l2 2" fill="none" stroke="#b0b0b0" stroke-width="1.1"/></svg>
<svg class="a" style="left:434px;top:157px;" width="44" height="10" viewBox="0 0 44 10"><rect x="1" y="1" width="5" height="5" fill="#aaa"/><rect x="3" y="3" width="5" height="5" fill="#d0d0d0"/><rect x="14" y="1" width="5" height="5" fill="none" stroke="#ccc" stroke-width="0.8"/><rect x="16" y="3.5" width="5" height="5" fill="none" stroke="#ccc" stroke-width="0.8"/><rect x="25" y="1" width="3" height="8" fill="#ccc"/><rect x="28.5" y="3" width="2.5" height="6" fill="#999"/><path d="M35 1h2M35 1v2M42 1h-2M42 1v2M35 9h2M35 9v-2M42 9h-2M42 9v-2" stroke="#ccc" stroke-width="0.8"/><rect x="37.5" y="3.5" width="2" height="3" fill="#ccc"/></svg>
<div class="a" style="left:483px;top:157px;width:1px;height:10px;background:#2c2c2c;"></div>
<div class="a" style="left:486px;top:157px;width:8px;height:10px;background:#3a3a3a;"></div>
<div class="t" style="top:158.80px;font-size:7px;line-height:7px;color:#d8a53a;left:488px;">1</div>
<div class="t" style="top:158.95px;font-size:6.7px;line-height:6.7px;color:#7e7e7e;left:507px;">24.00 fps</div>
<div class="t" style="top:158.95px;font-size:6.7px;line-height:6.7px;color:#d8a53a;left:537px;">0.0 s</div>
<div class="a" style="left:556px;top:156px;width:137px;height:12px;background:#2c2c2c;"></div>
<svg class="a" style="left:558px;top:159px;" width="4" height="6" viewBox="0 0 4 6"><path d="M3.5 0L0 3l3.5 3z" fill="#bbb"/></svg>
<div class="a" style="left:566px;top:157px;width:15px;height:10px;background:#3e3e3e;box-sizing:border-box;border:1px solid #4a4a4a;"></div>
<svg class="a" style="left:688px;top:159px;" width="4" height="6" viewBox="0 0 4 6"><path d="M0 0l3.5 3L0 6z" fill="#bbb"/></svg>
<div class="a" style="left:693px;top:156px;width:1px;height:12px;background:#222;"></div>
<svg class="a" style="left:700px;top:157px;" width="11" height="10" viewBox="0 0 11 10"><path d="M3 2.5A3.5 3.5 0 1 1 2.5 7" fill="none" stroke="#d0d0d0" stroke-width="1.2"/><path d="M1 0.5l2.5 2.5-3 1z" fill="#d0d0d0"/><path d="M1 9h9" stroke="#d0d0d0"/></svg>
<svg class="a" style="left:715px;top:160px;" width="8" height="4" viewBox="0 0 8 4"><path d="M0 4L4 0.5 8 4z" fill="#bbb"/></svg>
<div class="a" style="left:728px;top:161px;width:56px;height:2px;background:#1a1a1a;"></div>
<div class="a" style="left:741px;top:159px;width:5px;height:5px;background:#6a6a6a;border-radius:50%;"></div>
<svg class="a" style="left:788px;top:158px;" width="13" height="6" viewBox="0 0 13 6"><path d="M0 6L6.5 0 13 6z" fill="#bbb"/></svg>
<div class="a" style="left:221px;top:169px;width:587px;height:12px;background:#2f2f2f;"></div>
<div class="a" style="left:221px;top:169px;width:27px;height:12px;background:#474747;"></div>
<div class="t" style="top:172.15px;font-size:6.9px;line-height:6.9px;color:#ececec;font-weight:bold;left:225px;">Tools</div>
<div class="a" style="left:221px;top:181px;width:587px;height:21px;background:#474747;"></div>
<div class="a" style="left:221px;top:201px;width:587px;height:1px;background:#3a3a3a;"></div>
<div class="a" style="left:330px;top:183px;width:17px;height:17px;background:#2a2a2a;box-sizing:border-box;border:1px solid #222;"></div>
<svg class="a" style="left:226px;top:186px;" width="12" height="12" viewBox="0 0 12 12"><path d="M2 1v10l2.5-2.5 2 3.5 1.2-.7-2-3.4H9z" fill="none" stroke="#d6d6d6" stroke-width="1"/></svg>
<svg class="a" style="left:247px;top:186px;" width="12" height="12" viewBox="0 0 12 12"><path d="M2 1v10l2.5-2.5 2 3.5 1.2-.7-2-3.4H9z" fill="#d6d6d6"/></svg>
<svg class="a" style="left:269px;top:186px;" width="12" height="12" viewBox="0 0 12 12"><path d="M1 3l4 3v5l-4-3z" fill="#d6d6d6"/><path d="M6 2h6v8H6" fill="none" stroke="#d6d6d6" stroke-dasharray="1.2 1" stroke-width="0.9"/></svg>
<svg class="a" style="left:289px;top:186px;" width="12" height="12" viewBox="0 0 12 12"><path d="M6 1l5 5-5 5-5-5z" fill="none" stroke="#5e5e5e" stroke-width="1.2"/></svg>
<svg class="a" style="left:310px;top:186px;" width="12" height="12" viewBox="0 0 12 12"><ellipse cx="6" cy="5" rx="5" ry="3.3" fill="none" stroke="#d6d6d6" stroke-width="1.1"/><path d="M3 8q-1 2 1 3" fill="none" stroke="#d6d6d6"/></svg>
<svg class="a" style="left:332px;top:186px;" width="12" height="12" viewBox="0 0 12 12"><path d="M2 11l1.5-5 4-4 3 3-4 4z" fill="none" stroke="#d6d6d6" stroke-width="1.1"/><path d="M2 11l3-3" stroke="#d6d6d6" stroke-width="0.8"/></svg>
<svg class="a" style="left:353px;top:186px;" width="12" height="12" viewBox="0 0 12 12"><path d="M2 2h8M6 2v9" stroke="#5e5e5e" stroke-width="1.5"/></svg>
<svg class="a" style="left:374px;top:186px;" width="12" height="12" viewBox="0 0 12 12"><path d="M1.5 10.5l9-9" stroke="#d6d6d6" stroke-width="1.1"/></svg>
<svg class="a" style="left:395px;top:186px;" width="12" height="12" viewBox="0 0 12 12"><rect x="1" y="2.5" width="10" height="7" fill="#8a8a8a" stroke="#d6d6d6" stroke-width="0.8"/></svg>
<svg class="a" style="left:417px;top:186px;" width="12" height="12" viewBox="0 0 12 12"><ellipse cx="6" cy="6" rx="5.2" ry="3.8" fill="#8a8a8a" stroke="#d6d6d6" stroke-width="0.9"/></svg>
<svg class="a" style="left:437px;top:186px;" width="12" height="12" viewBox="0 0 12 12"><path d="M4 1.2h4l3 3v3.6l-3 3H4l-3-3V4.2z" fill="#8a8a8a" stroke="#d6d6d6" stroke-width="0.9"/></svg>
<svg class="a" style="left:458px;top:186px;" width="12" height="12" viewBox="0 0 12 12"><path d="M2 10l1-3 6-6 2 2-6 6z" fill="#d6d6d6"/></svg>
<svg class="a" style="left:478px;top:186px;" width="12" height="12" viewBox="0 0 12 12"><path d="M1 10q3-5 10-9" fill="none" stroke="#d6d6d6" stroke-width="1.2"/><ellipse cx="3" cy="8" rx="2.5" ry="2" fill="none" stroke="#d6d6d6"/></svg>
<svg class="a" style="left:499px;top:186px;" width="12" height="12" viewBox="0 0 12 12"><path d="M1 11q1-4 4-4 0 3-4 4zM5 7l6-6" fill="#d6d6d6" stroke="#d6d6d6" stroke-width="1.1"/></svg>
<svg class="a" style="left:522px;top:186px;" width="12" height="12" viewBox="0 0 12 12"><path d="M2 10l8-8M1 8.5l3 3M8 0.5l3 3" stroke="#d6d6d6" stroke-width="1.6"/></svg>
<svg class="a" style="left:543px;top:186px;" width="12" height="12" viewBox="0 0 12 12"><path d="M3 6q0-4 4-4M2 7h6v4H2z" fill="#d6d6d6" stroke="#d6d6d6"/></svg>
<svg class="a" style="left:563px;top:186px;" width="12" height="12" viewBox="0 0 12 12"><path d="M2 2q0 4 3 5M6 7h5v4H6z" fill="none" stroke="#d6d6d6" stroke-width="1.1"/></svg>
<svg class="a" style="left:584px;top:186px;" width="12" height="12" viewBox="0 0 12 12"><path d="M1.5 10.5l6-6M6 2l4 4M8.5 1l2.5 2.5" stroke="#d6d6d6" stroke-width="1.4"/></svg>
<svg class="a" style="left:605px;top:186px;" width="12" height="12" viewBox="0 0 12 12"><path d="M2 8l5-5 3 3-5 5H3z" fill="#d6d6d6"/></svg>
<svg class="a" style="left:626px;top:186px;" width="12" height="12" viewBox="0 0 12 12"><path d="M1 10l3-5 3 2 4-6M4 5l1-3" fill="none" stroke="#d6d6d6" stroke-width="1.3"/></svg>
<svg class="a" style="left:649px;top:186px;" width="12" height="12" viewBox="0 0 12 12"><path d="M3 11L1 6l1-1 2 2V2l1 0 0.3 4V1h1l0.2 5V1.5h1L7.8 6V2.5h1L9.5 8 8 11z" fill="#d6d6d6"/></svg>
<svg class="a" style="left:671px;top:186px;" width="12" height="12" viewBox="0 0 12 12"><circle cx="5" cy="5" r="3.5" fill="none" stroke="#d6d6d6" stroke-width="1.3"/><path d="M7.5 7.5l3.5 3.5" stroke="#d6d6d6" stroke-width="1.8"/></svg>
<div class="a" style="left:517px;top:184px;width:1px;height:15px;background:#3a3a3a;"></div>
<div class="a" style="left:645px;top:184px;width:1px;height:15px;background:#3a3a3a;"></div>
<div class="a" style="left:690px;top:184px;width:1px;height:15px;background:#3a3a3a;"></div>
<div class="a" style="left:780px;top:184px;width:1px;height:15px;background:#3a3a3a;"></div>
<div class="a" style="left:697px;top:184px;width:14px;height:14px;background:#262626;box-sizing:border-box;border:1px solid #1e1e1e;"></div>
<svg class="a" style="left:699px;top:186px;" width="10" height="10" viewBox="0 0 10 10"><path d="M2 8.5l5.5-5.5 1 1-5.5 5.5-1.5 0.5z" fill="#e8e8e8"/><circle cx="8" cy="2.2" r="1.6" fill="#e8e8e8"/></svg>
<div class="a" style="left:712px;top:184px;width:12px;height:14px;background:#663e2f;box-sizing:border-box;border:1px solid #2a2a2a;"></div>
<svg class="a" style="left:728px;top:186px;" width="10" height="10" viewBox="0 0 10 10"><path d="M2 5l3-3 3 3-3 3z" fill="#888"/><path d="M7.5 5.5q1.5 2 0.5 3" stroke="#aaa" fill="none"/></svg>
<div class="a" style="left:742px;top:184px;width:12px;height:14px;background:#e06068;box-sizing:border-box;border:1px solid #2a2a2a;"></div>
<svg class="a" style="left:756px;top:186px;" width="14" height="10" viewBox="0 0 14 10"><rect x="0" y="2" width="3" height="3" fill="#fff"/><rect x="3" y="5" width="3" height="3" fill="#111"/><rect x="8" y="1" width="4" height="4" fill="#eee"/><rect x="10" y="4" width="3" height="4" fill="none" stroke="#ddd" stroke-width="0.7"/></svg>
<div class="a" style="left:221px;top:202px;width:587px;height:13px;background:#292929;"></div>
<div class="a" style="left:224px;top:203px;width:76px;height:12px;background:#3b3b3b;"></div>
<div class="t" style="top:206.00px;font-size:7px;line-height:7px;color:#8a8a8a;left:229px;">×</div>
<div class="t" style="top:205.60px;font-size:6.8px;line-height:6.8px;color:#e4e4e4;font-weight:bold;left:236px;">bunny.fla (WebGL)*</div>
<div class="a" style="left:221px;top:215px;width:587px;height:14px;background:#3b3b3b;"></div>
<div class="a" style="left:238px;top:216px;width:463px;height:12px;background:#272727;border-radius:6px 0 0 6px;"></div>
<svg class="a" style="left:223px;top:219px;" width="9" height="7" viewBox="0 0 9 7"><path d="M0 3.5L4 0v2h5v3H4v2z" fill="#cfcfcf"/></svg>
<svg class="a" style="left:240px;top:217px;" width="11" height="10" viewBox="0 0 11 10"><path d="M0.5 3.5l9-1.8M2.5 3l1.2-2M5.5 2.4l1.2-2" stroke="#ddd" stroke-width="0.9"/><rect x="0.5" y="4.5" width="9.5" height="5" fill="#ddd"/></svg>
<div class="t" style="top:219.45px;font-size:7.5px;line-height:7.5px;color:#d6d6d6;left:256px;">Scene 1</div>
<svg class="a" style="left:287px;top:217px;" width="11" height="10" viewBox="0 0 11 10"><path d="M0.5 9.5V3M0.5 9.5H10M2 8l3-4 2 2 3-4" fill="none" stroke="#ddd" stroke-width="0.9"/><circle cx="8" cy="2" r="1.3" fill="#ddd"/></svg>
<div class="t" style="top:219.45px;font-size:7.5px;line-height:7.5px;color:#d6d6d6;left:303px;">Bunny</div>
<svg class="a" style="left:700px;top:217px;" width="13" height="11" viewBox="0 0 13 11"><path d="M0.5 3.5l9-1.8M2.5 3l1.2-2M5.5 2.4l1.2-2" stroke="#ddd" stroke-width="0.9"/><rect x="0.5" y="4.5" width="9.5" height="5" fill="#ddd"/><rect x="11" y="9" width="1.5" height="1.5" fill="#ddd"/></svg>
<svg class="a" style="left:721px;top:217px;" width="13" height="11" viewBox="0 0 13 11"><path d="M1 8l4-6 4 3" fill="none" stroke="#ccc" stroke-width="1"/><circle cx="6" cy="7" r="2.5" fill="#ccc"/><rect x="11" y="9" width="1.5" height="1.5" fill="#ddd"/></svg>
<svg class="a" style="left:742px;top:217px;" width="10" height="10" viewBox="0 0 10 10"><rect x="2" y="2" width="6" height="6" fill="none" stroke="#ccc" stroke-width="0.9"/><path d="M5 0v10M0 5h10" stroke="#ccc" stroke-width="0.6"/></svg>
<div class="a" style="left:757px;top:218px;width:34px;height:10px;background:#b4b4b4;box-sizing:border-box;border:1px solid #777;"></div>
<div class="t" style="top:219.60px;font-size:7.2px;line-height:7.2px;color:#222;left:759px;">100%</div>
<div class="a" style="left:793px;top:218px;width:11px;height:10px;background:#404040;box-sizing:border-box;border:1px solid #2e2e2e;"></div>
<svg class="a" style="left:796px;top:222px;" width="5" height="3" viewBox="0 0 5 3"><path d="M0 0h5L2.5 3z" fill="#ccc"/></svg>
<div class="a" style="left:221px;top:229px;width:587px;height:12px;background:#3c3c3c;"></div>
<div class="a" style="left:221px;top:241px;width:9px;height:390px;background:#3c3c3c;"></div>
<svg class="a" style="left:230px;top:229px;overflow:hidden;" width="571" height="12" viewBox="0 0 571 12"><rect x="-6.31" y="8.5" width="0.8" height="3" fill="#9a9a9a"/><rect x="-3.25" y="2" width="0.9" height="9.5" fill="#c4c4c4"/><rect x="-0.19" y="8.5" width="0.8" height="3" fill="#9a9a9a"/><rect x="2.86" y="8.5" width="0.8" height="3" fill="#9a9a9a"/><rect x="5.92" y="8.5" width="0.8" height="3" fill="#9a9a9a"/><rect x="8.97" y="8.5" width="0.8" height="3" fill="#9a9a9a"/><rect x="12.03" y="8.5" width="0.8" height="3" fill="#9a9a9a"/><rect x="15.08" y="8.5" width="0.8" height="3" fill="#9a9a9a"/><rect x="18.14" y="8.5" width="0.8" height="3" fill="#9a9a9a"/><rect x="21.19" y="8.5" width="0.8" height="3" fill="#9a9a9a"/><rect x="24.25" y="8.5" width="0.8" height="3" fill="#9a9a9a"/><rect x="27.30" y="2" width="0.9" height="9.5" fill="#c4c4c4"/><rect x="30.36" y="8.5" width="0.8" height="3" fill="#9a9a9a"/><rect x="33.41" y="8.5" width="0.8" height="3" fill="#9a9a9a"/><rect x="36.47" y="8.5" width="0.8" height="3" fill="#9a9a9a"/><rect x="39.52" y="8.5" width="0.8" height="3" fill="#9a9a9a"/><rect x="42.58" y="8.5" width="0.8" height="3" fill="#9a9a9a"/><rect x="45.63" y="8.5" width="0.8" height="3" fill="#9a9a9a"/><rect x="48.69" y="8.5" width="0.8" height="3" fill="#9a9a9a"/><rect x="51.74" y="8.5" width="0.8" height="3" fill="#9a9a9a"/><rect x="54.80" y="8.5" width="0.8" height="3" fill="#9a9a9a"/><rect x="57.85" y="2" width="0.9" height="9.5" fill="#c4c4c4"/><rect x="60.91" y="8.5" width="0.8" height="3" fill="#9a9a9a"/><rect x="63.96" y="8.5" width="0.8" height="3" fill="#9a9a9a"/><rect x="67.01" y="8.5" width="0.8" height="3" fill="#9a9a9a"/><rect x="70.07" y="8.5" width="0.8" height="3" fill="#9a9a9a"/><rect x="73.12" y="8.5" width="0.8" height="3" fill="#9a9a9a"/><rect x="76.18" y="8.5" width="0.8" height="3" fill="#9a9a9a"/><rect x="79.24" y="8.5" width="0.8" height="3" fill="#9a9a9a"/><rect x="82.29" y="8.5" width="0.8" height="3" fill="#9a9a9a"/><rect x="85.35" y="8.5" width="0.8" height="3" fill="#9a9a9a"/><rect x="88.40" y="2" width="0.9" height="9.5" fill="#c4c4c4"/><rect x="91.46" y="8.5" width="0.8" height="3" fill="#9a9a9a"/><rect x="94.51" y="8.5" width="0.8" height="3" fill="#9a9a9a"/><rect x="97.56" y="8.5" width="0.8" height="3" fill="#9a9a9a"/><rect x="100.62" y="8.5" width="0.8" height="3" fill="#9a9a9a"/><rect x="103.68" y="8.5" width="0.8" height="3" fill="#9a9a9a"/><rect x="106.73" y="8.5" width="0.8" height="3" fill="#9a9a9a"/><rect x="109.79" y="8.5" width="0.8" height="3" fill="#9a9a9a"/><rect x="112.84" y="8.5" width="0.8" height="3" fill="#9a9a9a"/><rect x="115.89" y="8.5" width="0.8" height="3" fill="#9a9a9a"/><rect x="118.95" y="2" width="0.9" height="9.5" fill="#c4c4c4"/><rect x="122.00" y="8.5" width="0.8" height="3" fill="#9a9a9a"/><rect x="125.06" y="8.5" width="0.8" height="3" fill="#9a9a9a"/><rect x="128.12" y="8.5" width="0.8" height="3" fill="#9a9a9a"/><rect x="131.17" y="8.5" width="0.8" height="3" fill="#9a9a9a"/><rect x="134.23" y="8.5" width="0.8" height="3" fill="#9a9a9a"/><rect x="137.28" y="8.5" width="0.8" height="3" fill="#9a9a9a"/><rect x="140.34" y="8.5" width="0.8" height="3" fill="#9a9a9a"/><rect x="143.39" y="8.5" width="0.8" height="3" fill="#9a9a9a"/><rect x="146.45" y="8.5" width="0.8" height="3" fill="#9a9a9a"/><rect x="149.50" y="2" width="0.9" height="9.5" fill="#c4c4c4"/><rect x="152.56" y="8.5" width="0.8" height="3" fill="#9a9a9a"/><rect x="155.61" y="8.5" width="0.8" height="3" fill="#9a9a9a"/><rect x="158.67" y="8.5" width="0.8" height="3" fill="#9a9a9a"/><rect x="161.72" y="8.5" width="0.8" height="3" fill="#9a9a9a"/><rect x="164.78" y="8.5" width="0.8" height="3" fill="#9a9a9a"/><rect x="167.83" y="8.5" width="0.8" height="3" fill="#9a9a9a"/><rect x="170.88" y="8.5" width="0.8" height="3" fill="#9a9a9a"/><rect x="173.94" y="8.5" width="0.8" height="3" fill="#9a9a9a"/><rect x="177.00" y="8.5" width="0.8" height="3" fill="#9a9a9a"/><rect x="180.05" y="2" width="0.9" height="9.5" fill="#c4c4c4"/><rect x="183.11" y="8.5" width="0.8" height="3" fill="#9a9a9a"/><rect x="186.16" y="8.5" width="0.8" height="3" fill="#9a9a9a"/><rect x="189.22" y="8.5" width="0.8" height="3" fill="#9a9a9a"/><rect x="192.27" y="8.5" width="0.8" height="3" fill="#9a9a9a"/><rect x="195.33" y="8.5" width="0.8" height="3" fill="#9a9a9a"/><rect x="198.38" y="8.5" width="0.8" height="3" fill="#9a9a9a"/><rect x="201.44" y="8.5" width="0.8" height="3" fill="#9a9a9a"/><rect x="204.49" y="8.5" width="0.8" height="3" fill="#9a9a9a"/><rect x="207.55" y="8.5" width="0.8" height="3" fill="#9a9a9a"/><rect x="210.60" y="2" width="0.9" height="9.5" fill="#c4c4c4"/><rect x="213.66" y="8.5" width="0.8" height="3" fill="#9a9a9a"/><rect x="216.71" y="8.5" width="0.8" height="3" fill="#9a9a9a"/><rect x="219.77" y="8.5" width="0.8" height="3" fill="#9a9a9a"/><rect x="222.82" y="8.5" width="0.8" height="3" fill="#9a9a9a"/><rect x="225.88" y="8.5" width="0.8" height="3" fill="#9a9a9a"/><rect x="228.93" y="8.5" width="0.8" height="3" fill="#9a9a9a"/><rect x="231.99" y="8.5" width="0.8" height="3" fill="#9a9a9a"/><rect x="235.04" y="8.5" width="0.8" height="3" fill="#9a9a9a"/><rect x="238.10" y="8.5" width="0.8" height="3" fill="#9a9a9a"/><rect x="241.15" y="2" width="0.9" height="9.5" fill="#c4c4c4"/><rect x="244.21" y="8.5" width="0.8" height="3" fill="#9a9a9a"/><rect x="247.26" y="8.5" width="0.8" height="3" fill="#9a9a9a"/><rect x="250.32" y="8.5" width="0.8" height="3" fill="#9a9a9a"/><rect x="253.37" y="8.5" width="0.8" height="3" fill="#9a9a9a"/><rect x="256.43" y="8.5" width="0.8" height="3" fill="#9a9a9a"/><rect x="259.48" y="8.5" width="0.8" height="3" fill="#9a9a9a"/><rect x="262.54" y="8.5" width="0.8" height="3" fill="#9a9a9a"/><rect x="265.59" y="8.5" width="0.8" height="3" fill="#9a9a9a"/><rect x="268.65" y="8.5" width="0.8" height="3" fill="#9a9a9a"/><rect x="271.70" y="2" width="0.9" height="9.5" fill="#c4c4c4"/><rect x="274.75" y="8.5" width="0.8" height="3" fill="#9a9a9a"/><rect x="277.81" y="8.5" width="0.8" height="3" fill="#9a9a9a"/><rect x="280.87" y="8.5" width="0.8" height="3" fill="#9a9a9a"/><rect x="283.92" y="8.5" width="0.8" height="3" fill="#9a9a9a"/><rect x="286.98" y="8.5" width="0.8" height="3" fill="#9a9a9a"/><rect x="290.03" y="8.5" width="0.8" height="3" fill="#9a9a9a"/><rect x="293.09" y="8.5" width="0.8" height="3" fill="#9a9a9a"/><rect x="296.14" y="8.5" width="0.8" height="3" fill="#9a9a9a"/><rect x="299.20" y="8.5" width="0.8" height="3" fill="#9a9a9a"/><rect x="302.25" y="2" width="0.9" height="9.5" fill="#c4c4c4"/><rect x="305.31" y="8.5" width="0.8" height="3" fill="#9a9a9a"/><rect x="308.36" y="8.5" width="0.8" height="3" fill="#9a9a9a"/><rect x="311.41" y="8.5" width="0.8" height="3" fill="#9a9a9a"/><rect x="314.47" y="8.5" width="0.8" height="3" fill="#9a9a9a"/><rect x="317.52" y="8.5" width="0.8" height="3" fill="#9a9a9a"/><rect x="320.58" y="8.5" width="0.8" height="3" fill="#9a9a9a"/><rect x="323.63" y="8.5" width="0.8" height="3" fill="#9a9a9a"/><rect x="326.69" y="8.5" width="0.8" height="3" fill="#9a9a9a"/><rect x="329.75" y="8.5" width="0.8" height="3" fill="#9a9a9a"/><rect x="332.80" y="2" width="0.9" height="9.5" fill="#c4c4c4"/><rect x="335.86" y="8.5" width="0.8" height="3" fill="#9a9a9a"/><rect x="338.91" y="8.5" width="0.8" height="3" fill="#9a9a9a"/><rect x="341.97" y="8.5" width="0.8" height="3" fill="#9a9a9a"/><rect x="345.02" y="8.5" width="0.8" height="3" fill="#9a9a9a"/><rect x="348.08" y="8.5" width="0.8" height="3" fill="#9a9a9a"/><rect x="351.13" y="8.5" width="0.8" height="3" fill="#9a9a9a"/><rect x="354.19" y="8.5" width="0.8" height="3" fill="#9a9a9a"/><rect x="357.24" y="8.5" width="0.8" height="3" fill="#9a9a9a"/><rect x="360.30" y="8.5" width="0.8" height="3" fill="#9a9a9a"/><rect x="363.35" y="2" width="0.9" height="9.5" fill="#c4c4c4"/><rect x="366.40" y="8.5" width="0.8" height="3" fill="#9a9a9a"/><rect x="369.46" y="8.5" width="0.8" height="3" fill="#9a9a9a"/><rect x="372.52" y="8.5" width="0.8" height="3" fill="#9a9a9a"/><rect x="375.57" y="8.5" width="0.8" height="3" fill="#9a9a9a"/><rect x="378.62" y="8.5" width="0.8" height="3" fill="#9a9a9a"/><rect x="381.68" y="8.5" width="0.8" height="3" fill="#9a9a9a"/><rect x="384.74" y="8.5" width="0.8" height="3" fill="#9a9a9a"/><rect x="387.79" y="8.5" width="0.8" height="3" fill="#9a9a9a"/><rect x="390.85" y="8.5" width="0.8" height="3" fill="#9a9a9a"/><rect x="393.90" y="2" width="0.9" height="9.5" fill="#c4c4c4"/><rect x="396.96" y="8.5" width="0.8" height="3" fill="#9a9a9a"/><rect x="400.01" y="8.5" width="0.8" height="3" fill="#9a9a9a"/><rect x="403.07" y="8.5" width="0.8" height="3" fill="#9a9a9a"/><rect x="406.12" y="8.5" width="0.8" height="3" fill="#9a9a9a"/><rect x="409.17" y="8.5" width="0.8" height="3" fill="#9a9a9a"/><rect x="412.23" y="8.5" width="0.8" height="3" fill="#9a9a9a"/><rect x="415.29" y="8.5" width="0.8" height="3" fill="#9a9a9a"/><rect x="418.34" y="8.5" width="0.8" height="3" fill="#9a9a9a"/><rect x="421.39" y="8.5" width="0.8" height="3" fill="#9a9a9a"/><rect x="424.45" y="2" width="0.9" height="9.5" fill="#c4c4c4"/><rect x="427.51" y="8.5" width="0.8" height="3" fill="#9a9a9a"/><rect x="430.56" y="8.5" width="0.8" height="3" fill="#9a9a9a"/><rect x="433.62" y="8.5" width="0.8" height="3" fill="#9a9a9a"/><rect x="436.67" y="8.5" width="0.8" height="3" fill="#9a9a9a"/><rect x="439.73" y="8.5" width="0.8" height="3" fill="#9a9a9a"/><rect x="442.78" y="8.5" width="0.8" height="3" fill="#9a9a9a"/><rect x="445.84" y="8.5" width="0.8" height="3" fill="#9a9a9a"/><rect x="448.89" y="8.5" width="0.8" height="3" fill="#9a9a9a"/><rect x="451.95" y="8.5" width="0.8" height="3" fill="#9a9a9a"/><rect x="455.00" y="2" width="0.9" height="9.5" fill="#c4c4c4"/><rect x="458.06" y="8.5" width="0.8" height="3" fill="#9a9a9a"/><rect x="461.11" y="8.5" width="0.8" height="3" fill="#9a9a9a"/><rect x="464.16" y="8.5" width="0.8" height="3" fill="#9a9a9a"/><rect x="467.22" y="8.5" width="0.8" height="3" fill="#9a9a9a"/><rect x="470.28" y="8.5" width="0.8" height="3" fill="#9a9a9a"/><rect x="473.33" y="8.5" width="0.8" height="3" fill="#9a9a9a"/><rect x="476.38" y="8.5" width="0.8" height="3" fill="#9a9a9a"/><rect x="479.44" y="8.5" width="0.8" height="3" fill="#9a9a9a"/><rect x="482.50" y="8.5" width="0.8" height="3" fill="#9a9a9a"/><rect x="485.55" y="2" width="0.9" height="9.5" fill="#c4c4c4"/><rect x="488.61" y="8.5" width="0.8" height="3" fill="#9a9a9a"/><rect x="491.66" y="8.5" width="0.8" height="3" fill="#9a9a9a"/><rect x="494.72" y="8.5" width="0.8" height="3" fill="#9a9a9a"/><rect x="497.77" y="8.5" width="0.8" height="3" fill="#9a9a9a"/><rect x="500.83" y="8.5" width="0.8" height="3" fill="#9a9a9a"/><rect x="503.88" y="8.5" width="0.8" height="3" fill="#9a9a9a"/><rect x="506.93" y="8.5" width="0.8" height="3" fill="#9a9a9a"/><rect x="509.99" y="8.5" width="0.8" height="3" fill="#9a9a9a"/><rect x="513.05" y="8.5" width="0.8" height="3" fill="#9a9a9a"/><rect x="516.10" y="2" width="0.9" height="9.5" fill="#c4c4c4"/><rect x="519.15" y="8.5" width="0.8" height="3" fill="#9a9a9a"/><rect x="522.21" y="8.5" width="0.8" height="3" fill="#9a9a9a"/><rect x="525.27" y="8.5" width="0.8" height="3" fill="#9a9a9a"/><rect x="528.32" y="8.5" width="0.8" height="3" fill="#9a9a9a"/><rect x="531.38" y="8.5" width="0.8" height="3" fill="#9a9a9a"/><rect x="534.43" y="8.5" width="0.8" height="3" fill="#9a9a9a"/><rect x="537.49" y="8.5" width="0.8" height="3" fill="#9a9a9a"/><rect x="540.54" y="8.5" width="0.8" height="3" fill="#9a9a9a"/><rect x="543.60" y="8.5" width="0.8" height="3" fill="#9a9a9a"/><rect x="546.65" y="2" width="0.9" height="9.5" fill="#c4c4c4"/><rect x="549.71" y="8.5" width="0.8" height="3" fill="#9a9a9a"/><rect x="552.76" y="8.5" width="0.8" height="3" fill="#9a9a9a"/><rect x="555.82" y="8.5" width="0.8" height="3" fill="#9a9a9a"/><rect x="558.87" y="8.5" width="0.8" height="3" fill="#9a9a9a"/><rect x="561.92" y="8.5" width="0.8" height="3" fill="#9a9a9a"/><rect x="564.98" y="8.5" width="0.8" height="3" fill="#9a9a9a"/><rect x="568.04" y="8.5" width="0.8" height="3" fill="#9a9a9a"/><rect x="571.09" y="8.5" width="0.8" height="3" fill="#9a9a9a"/></svg>
<div class="a" style="left:230px;top:229px;width:571px;height:12px;overflow:hidden;">
<div class="t" style="left:-1.25px;top:2.8px;font-size:7px;line-height:7px;color:#c8c8c8;">350</div>
<div class="t" style="left:29.30px;top:2.8px;font-size:7px;line-height:7px;color:#c8c8c8;">300</div>
<div class="t" style="left:59.85px;top:2.8px;font-size:7px;line-height:7px;color:#c8c8c8;">250</div>
<div class="t" style="left:90.40px;top:2.8px;font-size:7px;line-height:7px;color:#c8c8c8;">200</div>
<div class="t" style="left:120.95px;top:2.8px;font-size:7px;line-height:7px;color:#c8c8c8;">150</div>
<div class="t" style="left:151.50px;top:2.8px;font-size:7px;line-height:7px;color:#c8c8c8;">100</div>
<div class="t" style="left:182.05px;top:2.8px;font-size:7px;line-height:7px;color:#c8c8c8;">50</div>
<div class="t" style="left:212.60px;top:2.8px;font-size:7px;line-height:7px;color:#c8c8c8;">0</div>
<div class="t" style="left:243.15px;top:2.8px;font-size:7px;line-height:7px;color:#c8c8c8;">50</div>
<div class="t" style="left:273.70px;top:2.8px;font-size:7px;line-height:7px;color:#c8c8c8;">100</div>
<div class="t" style="left:304.25px;top:2.8px;font-size:7px;line-height:7px;color:#c8c8c8;">150</div>
<div class="t" style="left:334.80px;top:2.8px;font-size:7px;line-height:7px;color:#c8c8c8;">200</div>
<div class="t" style="left:365.35px;top:2.8px;font-size:7px;line-height:7px;color:#c8c8c8;">250</div>
<div class="t" style="left:395.90px;top:2.8px;font-size:7px;line-height:7px;color:#c8c8c8;">300</div>
<div class="t" style="left:426.45px;top:2.8px;font-size:7px;line-height:7px;color:#c8c8c8;">350</div>
<div class="t" style="left:457.00px;top:2.8px;font-size:7px;line-height:7px;color:#c8c8c8;">400</div>
<div class="t" style="left:487.55px;top:2.8px;font-size:7px;line-height:7px;color:#c8c8c8;">450</div>
<div class="t" style="left:518.10px;top:2.8px;font-size:7px;line-height:7px;color:#c8c8c8;">500</div>
<div class="t" style="left:548.65px;top:2.8px;font-size:7px;line-height:7px;color:#c8c8c8;">550</div>
</div>
<svg class="a" style="left:221px;top:241px;overflow:hidden;" width="9" height="390" viewBox="0 0 9 390"><rect x="3" y="0.20" width="6" height="0.9" fill="#c4c4c4"/><rect x="6" y="3.25" width="3" height="0.8" fill="#9a9a9a"/><rect x="6" y="6.31" width="3" height="0.8" fill="#9a9a9a"/><rect x="6" y="9.37" width="3" height="0.8" fill="#9a9a9a"/><rect x="6" y="12.42" width="3" height="0.8" fill="#9a9a9a"/><rect x="6" y="15.48" width="3" height="0.8" fill="#9a9a9a"/><rect x="6" y="18.53" width="3" height="0.8" fill="#9a9a9a"/><rect x="6" y="21.59" width="3" height="0.8" fill="#9a9a9a"/><rect x="6" y="24.64" width="3" height="0.8" fill="#9a9a9a"/><rect x="6" y="27.69" width="3" height="0.8" fill="#9a9a9a"/><rect x="3" y="30.75" width="6" height="0.9" fill="#c4c4c4"/><rect x="6" y="33.81" width="3" height="0.8" fill="#9a9a9a"/><rect x="6" y="36.86" width="3" height="0.8" fill="#9a9a9a"/><rect x="6" y="39.92" width="3" height="0.8" fill="#9a9a9a"/><rect x="6" y="42.97" width="3" height="0.8" fill="#9a9a9a"/><rect x="6" y="46.03" width="3" height="0.8" fill="#9a9a9a"/><rect x="6" y="49.08" width="3" height="0.8" fill="#9a9a9a"/><rect x="6" y="52.13" width="3" height="0.8" fill="#9a9a9a"/><rect x="6" y="55.19" width="3" height="0.8" fill="#9a9a9a"/><rect x="6" y="58.25" width="3" height="0.8" fill="#9a9a9a"/><rect x="3" y="61.30" width="6" height="0.9" fill="#c4c4c4"/><rect x="6" y="64.36" width="3" height="0.8" fill="#9a9a9a"/><rect x="6" y="67.41" width="3" height="0.8" fill="#9a9a9a"/><rect x="6" y="70.47" width="3" height="0.8" fill="#9a9a9a"/><rect x="6" y="73.52" width="3" height="0.8" fill="#9a9a9a"/><rect x="6" y="76.58" width="3" height="0.8" fill="#9a9a9a"/><rect x="6" y="79.63" width="3" height="0.8" fill="#9a9a9a"/><rect x="6" y="82.69" width="3" height="0.8" fill="#9a9a9a"/><rect x="6" y="85.74" width="3" height="0.8" fill="#9a9a9a"/><rect x="6" y="88.80" width="3" height="0.8" fill="#9a9a9a"/><rect x="3" y="91.85" width="6" height="0.9" fill="#c4c4c4"/><rect x="6" y="94.91" width="3" height="0.8" fill="#9a9a9a"/><rect x="6" y="97.96" width="3" height="0.8" fill="#9a9a9a"/><rect x="6" y="101.01" width="3" height="0.8" fill="#9a9a9a"/><rect x="6" y="104.07" width="3" height="0.8" fill="#9a9a9a"/><rect x="6" y="107.12" width="3" height="0.8" fill="#9a9a9a"/><rect x="6" y="110.18" width="3" height="0.8" fill="#9a9a9a"/><rect x="6" y="113.24" width="3" height="0.8" fill="#9a9a9a"/><rect x="6" y="116.29" width="3" height="0.8" fill="#9a9a9a"/><rect x="6" y="119.35" width="3" height="0.8" fill="#9a9a9a"/><rect x="3" y="122.40" width="6" height="0.9" fill="#c4c4c4"/><rect x="6" y="125.46" width="3" height="0.8" fill="#9a9a9a"/><rect x="6" y="128.51" width="3" height="0.8" fill="#9a9a9a"/><rect x="6" y="131.56" width="3" height="0.8" fill="#9a9a9a"/><rect x="6" y="134.62" width="3" height="0.8" fill="#9a9a9a"/><rect x="6" y="137.68" width="3" height="0.8" fill="#9a9a9a"/><rect x="6" y="140.73" width="3" height="0.8" fill="#9a9a9a"/><rect x="6" y="143.79" width="3" height="0.8" fill="#9a9a9a"/><rect x="6" y="146.84" width="3" height="0.8" fill="#9a9a9a"/><rect x="6" y="149.89" width="3" height="0.8" fill="#9a9a9a"/><rect x="3" y="152.95" width="6" height="0.9" fill="#c4c4c4"/><rect x="6" y="156.00" width="3" height="0.8" fill="#9a9a9a"/><rect x="6" y="159.06" width="3" height="0.8" fill="#9a9a9a"/><rect x="6" y="162.12" width="3" height="0.8" fill="#9a9a9a"/><rect x="6" y="165.17" width="3" height="0.8" fill="#9a9a9a"/><rect x="6" y="168.23" width="3" height="0.8" fill="#9a9a9a"/><rect x="6" y="171.28" width="3" height="0.8" fill="#9a9a9a"/><rect x="6" y="174.34" width="3" height="0.8" fill="#9a9a9a"/><rect x="6" y="177.39" width="3" height="0.8" fill="#9a9a9a"/><rect x="6" y="180.45" width="3" height="0.8" fill="#9a9a9a"/><rect x="3" y="183.50" width="6" height="0.9" fill="#c4c4c4"/><rect x="6" y="186.56" width="3" height="0.8" fill="#9a9a9a"/><rect x="6" y="189.61" width="3" height="0.8" fill="#9a9a9a"/><rect x="6" y="192.67" width="3" height="0.8" fill="#9a9a9a"/><rect x="6" y="195.72" width="3" height="0.8" fill="#9a9a9a"/><rect x="6" y="198.78" width="3" height="0.8" fill="#9a9a9a"/><rect x="6" y="201.83" width="3" height="0.8" fill="#9a9a9a"/><rect x="6" y="204.88" width="3" height="0.8" fill="#9a9a9a"/><rect x="6" y="207.94" width="3" height="0.8" fill="#9a9a9a"/><rect x="6" y="211.00" width="3" height="0.8" fill="#9a9a9a"/><rect x="3" y="214.05" width="6" height="0.9" fill="#c4c4c4"/><rect x="6" y="217.11" width="3" height="0.8" fill="#9a9a9a"/><rect x="6" y="220.16" width="3" height="0.8" fill="#9a9a9a"/><rect x="6" y="223.22" width="3" height="0.8" fill="#9a9a9a"/><rect x="6" y="226.27" width="3" height="0.8" fill="#9a9a9a"/><rect x="6" y="229.33" width="3" height="0.8" fill="#9a9a9a"/><rect x="6" y="232.38" width="3" height="0.8" fill="#9a9a9a"/><rect x="6" y="235.44" width="3" height="0.8" fill="#9a9a9a"/><rect x="6" y="238.49" width="3" height="0.8" fill="#9a9a9a"/><rect x="6" y="241.55" width="3" height="0.8" fill="#9a9a9a"/><rect x="3" y="244.60" width="6" height="0.9" fill="#c4c4c4"/><rect x="6" y="247.66" width="3" height="0.8" fill="#9a9a9a"/><rect x="6" y="250.71" width="3" height="0.8" fill="#9a9a9a"/><rect x="6" y="253.77" width="3" height="0.8" fill="#9a9a9a"/><rect x="6" y="256.82" width="3" height="0.8" fill="#9a9a9a"/><rect x="6" y="259.88" width="3" height="0.8" fill="#9a9a9a"/><rect x="6" y="262.93" width="3" height="0.8" fill="#9a9a9a"/><rect x="6" y="265.99" width="3" height="0.8" fill="#9a9a9a"/><rect x="6" y="269.04" width="3" height="0.8" fill="#9a9a9a"/><rect x="6" y="272.10" width="3" height="0.8" fill="#9a9a9a"/><rect x="3" y="275.15" width="6" height="0.9" fill="#c4c4c4"/><rect x="6" y="278.21" width="3" height="0.8" fill="#9a9a9a"/><rect x="6" y="281.26" width="3" height="0.8" fill="#9a9a9a"/><rect x="6" y="284.32" width="3" height="0.8" fill="#9a9a9a"/><rect x="6" y="287.37" width="3" height="0.8" fill="#9a9a9a"/><rect x="6" y="290.43" width="3" height="0.8" fill="#9a9a9a"/><rect x="6" y="293.48" width="3" height="0.8" fill="#9a9a9a"/><rect x="6" y="296.54" width="3" height="0.8" fill="#9a9a9a"/><rect x="6" y="299.59" width="3" height="0.8" fill="#9a9a9a"/><rect x="6" y="302.64" width="3" height="0.8" fill="#9a9a9a"/><rect x="3" y="305.70" width="6" height="0.9" fill="#c4c4c4"/><rect x="6" y="308.75" width="3" height="0.8" fill="#9a9a9a"/><rect x="6" y="311.81" width="3" height="0.8" fill="#9a9a9a"/><rect x="6" y="314.87" width="3" height="0.8" fill="#9a9a9a"/><rect x="6" y="317.92" width="3" height="0.8" fill="#9a9a9a"/><rect x="6" y="320.98" width="3" height="0.8" fill="#9a9a9a"/><rect x="6" y="324.03" width="3" height="0.8" fill="#9a9a9a"/><rect x="6" y="327.09" width="3" height="0.8" fill="#9a9a9a"/><rect x="6" y="330.14" width="3" height="0.8" fill="#9a9a9a"/><rect x="6" y="333.20" width="3" height="0.8" fill="#9a9a9a"/><rect x="3" y="336.25" width="6" height="0.9" fill="#c4c4c4"/><rect x="6" y="339.31" width="3" height="0.8" fill="#9a9a9a"/><rect x="6" y="342.36" width="3" height="0.8" fill="#9a9a9a"/><rect x="6" y="345.41" width="3" height="0.8" fill="#9a9a9a"/><rect x="6" y="348.47" width="3" height="0.8" fill="#9a9a9a"/><rect x="6" y="351.52" width="3" height="0.8" fill="#9a9a9a"/><rect x="6" y="354.58" width="3" height="0.8" fill="#9a9a9a"/><rect x="6" y="357.63" width="3" height="0.8" fill="#9a9a9a"/><rect x="6" y="360.69" width="3" height="0.8" fill="#9a9a9a"/><rect x="6" y="363.75" width="3" height="0.8" fill="#9a9a9a"/><rect x="3" y="366.80" width="6" height="0.9" fill="#c4c4c4"/><rect x="6" y="369.86" width="3" height="0.8" fill="#9a9a9a"/><rect x="6" y="372.91" width="3" height="0.8" fill="#9a9a9a"/><rect x="6" y="375.97" width="3" height="0.8" fill="#9a9a9a"/><rect x="6" y="379.02" width="3" height="0.8" fill="#9a9a9a"/><rect x="6" y="382.08" width="3" height="0.8" fill="#9a9a9a"/><rect x="6" y="385.13" width="3" height="0.8" fill="#9a9a9a"/><rect x="6" y="388.19" width="3" height="0.8" fill="#9a9a9a"/></svg>
<div class="t" style="left:219.5px;top:243.2px;width:9px;font-size:7px;line-height:9px;color:#c8c8c8;writing-mode:vertical-rl;transform:rotate(180deg);height:16px;text-align:right;">400</div>
<div class="t" style="left:219.5px;top:273.8px;width:9px;font-size:7px;line-height:9px;color:#c8c8c8;writing-mode:vertical-rl;transform:rotate(180deg);height:16px;text-align:right;">350</div>
<div class="t" style="left:219.5px;top:304.3px;width:9px;font-size:7px;line-height:9px;color:#c8c8c8;writing-mode:vertical-rl;transform:rotate(180deg);height:16px;text-align:right;">300</div>
<div class="t" style="left:219.5px;top:334.9px;width:9px;font-size:7px;line-height:9px;color:#c8c8c8;writing-mode:vertical-rl;transform:rotate(180deg);height:16px;text-align:right;">250</div>
<div class="t" style="left:219.5px;top:365.4px;width:9px;font-size:7px;line-height:9px;color:#c8c8c8;writing-mode:vertical-rl;transform:rotate(180deg);height:16px;text-align:right;">200</div>
<div class="t" style="left:219.5px;top:396.0px;width:9px;font-size:7px;line-height:9px;color:#c8c8c8;writing-mode:vertical-rl;transform:rotate(180deg);height:16px;text-align:right;">150</div>
<div class="t" style="left:219.5px;top:426.5px;width:9px;font-size:7px;line-height:9px;color:#c8c8c8;writing-mode:vertical-rl;transform:rotate(180deg);height:16px;text-align:right;">100</div>
<div class="t" style="left:219.5px;top:457.1px;width:9px;font-size:7px;line-height:9px;color:#c8c8c8;writing-mode:vertical-rl;transform:rotate(180deg);height:16px;text-align:right;">50</div>
<div class="t" style="left:219.5px;top:487.6px;width:9px;font-size:7px;line-height:9px;color:#c8c8c8;writing-mode:vertical-rl;transform:rotate(180deg);height:16px;text-align:right;">0</div>
<div class="t" style="left:219.5px;top:518.1px;width:9px;font-size:7px;line-height:9px;color:#c8c8c8;writing-mode:vertical-rl;transform:rotate(180deg);height:16px;text-align:right;">50</div>
<div class="t" style="left:219.5px;top:548.7px;width:9px;font-size:7px;line-height:9px;color:#c8c8c8;writing-mode:vertical-rl;transform:rotate(180deg);height:16px;text-align:right;">100</div>
<div class="t" style="left:219.5px;top:579.2px;width:9px;font-size:7px;line-height:9px;color:#c8c8c8;writing-mode:vertical-rl;transform:rotate(180deg);height:16px;text-align:right;">150</div>
<div class="t" style="left:219.5px;top:609.8px;width:9px;font-size:7px;line-height:9px;color:#c8c8c8;writing-mode:vertical-rl;transform:rotate(180deg);height:16px;text-align:right;">200</div>
<div class="a" style="left:694.8px;top:230px;width:1.6px;height:11px;background:rgba(190,50,70,0.75);"></div>
<div class="a" style="left:221px;top:375.6px;width:9px;height:1.6px;background:rgba(190,50,70,0.75);"></div>
<div class="a" style="left:230px;top:241px;width:571px;height:390px;background:#e1ddbd;"></div>
<div class="a" style="left:777.5px;top:241px;width:2px;height:390px;background:#c0e2d0;"></div>
<div class="a" style="left:230px;top:484.5px;width:571px;height:1.5px;background:#c0e2d0;"></div>
<svg class="a" style="left:437px;top:482px;" width="7" height="8" viewBox="0 0 7 8"><path d="M3.5 0v8M0 4h7" stroke="#444" stroke-width="0.8"/></svg>
<div class="a" style="left:801px;top:241px;width:7px;height:390px;background:#2c2c2c;"></div>
<div class="a" style="left:801px;top:249px;width:7px;height:191px;background:#3c3c3c;"></div>
<svg class="a" style="left:802px;top:243px;" width="5" height="4" viewBox="0 0 5 4"><path d="M0 3.5L2.5 0.5 5 3.5z" fill="#ccc"/></svg>
<svg class="a" style="left:802px;top:625px;" width="5" height="4" viewBox="0 0 5 4"><path d="M0 0.5L2.5 3.5 5 0.5z" fill="#ccc"/></svg>
<div class="a" style="left:221px;top:631px;width:587px;height:7px;background:#2e2e2e;"></div>
<div class="a" style="left:230px;top:631px;width:114px;height:7px;background:#3a3a3a;"></div>
<svg class="a" style="left:231px;top:632px;" width="4" height="5" viewBox="0 0 4 5"><path d="M3.5 0L0 2.5 3.5 5z" fill="#ccc"/></svg>
<svg class="a" style="left:796px;top:632px;" width="4" height="5" viewBox="0 0 4 5"><path d="M0 0l3.5 2.5L0 5z" fill="#ccc"/></svg>
<svg class="a" style="left:0;top:0;" width="1024" height="643" viewBox="0 0 1024 643"><g transform="translate(0,0) scale(1)">
<g stroke-linejoin="round" stroke-linecap="round">
<path d="M464,353 C467,347 476,346 487,348.5 C498,351 508,358 514,367 C518,373 521,380 523,389 L515,391 C505,388 490,381 480,373.5 C472,367 465,360 464,353 Z" fill="#2db4e4" stroke="#121212" stroke-width="2.8"/>
<path d="M470,365 C480,362 498,366 511,381 L516,390 C505,388 490,381 480,373.5 C476,370 472,368 470,365 Z" fill="#1c8fc2"/>
<path d="M478.5,363.5 C488,363 502,368 511,381" fill="none" stroke="#121212" stroke-width="1.5"/>
<path d="M512.5,339 C518,336 530,341 539,348.5 C550,358 557,370 559.7,386 L557,388 C550,385 540,377 530,367.3 C522,360 515,350 512.5,339 Z" fill="#2db4e4" stroke="#121212" stroke-width="2.8"/>
<path d="M514,342 C517,351 523,360 530,367.3 C540,377 550,385 557,388 C546,372 532,356 514,342 Z" fill="#1c8fc2"/>
<path d="M481.6,437 C485,431 492,426 499.3,423.7 L503,439 L489,441 Z" fill="#2db4e4" stroke="#121212" stroke-width="2"/>
<path d="M500,438 L565,437 L565,470 C545,472 520,472 500,470 Z" fill="#444444" stroke="#121212" stroke-width="2"/>
<path d="M521,445 L529,443.5 L540,460 L534,465 Z" fill="#727272" stroke="#121212" stroke-width="1"/>
<path d="M550,443 L558,443 L532,470 L524,470 Z" fill="#727272" stroke="#121212" stroke-width="1"/>
<path d="M516,389 L566,390 C567,405 568,425 570.5,440 L511,444 C507,436 502,428 498.5,419 C504,409 510,398 516,389 Z" fill="#2db4e4" stroke="#121212" stroke-width="2.6"/>
<path d="M498.5,419 C503,430 508,438 511,444 L535,442 C520,436 506,428 498.5,419 Z" fill="#1c8fc2"/>
<path d="M512,399 C508,408 510,418 516,423" fill="none" stroke="#176f9a" stroke-width="1.2"/>
<path d="M519,394.5 C530,392 545,395 553,398 L552,405 C542,402 530,401 521,403.5 Z" fill="#121212"/>
<path d="M552,397 L576,397 L577,405 C568,405 558,406 553,407 Z" fill="#121212"/>
<path d="M526,404 C532,402.5 540,403 545,405 C545,410 540,413.5 535,413.5 C529,413.5 526,409 526,404 Z" fill="#f4f4f4" stroke="#121212" stroke-width="1.4"/>
<circle cx="541" cy="408.5" r="2.4" fill="#222"/>
<path d="M554.5,405.5 C560,404.5 566,405 571,406.5 C571,411.5 567,415 562,415 C557,415 554.5,410.5 554.5,405.5 Z" fill="#f4f4f4" stroke="#121212" stroke-width="1.4"/>
<circle cx="568" cy="410" r="2.2" fill="#222"/>
<path d="M548,421.5 L562.5,421 L555,426.5 Z" fill="#e6968c" stroke="#121212" stroke-width="1.2"/>
<path d="M508.5,418 C516,420 528,424 545,431" fill="none" stroke="#121212" stroke-width="1.8"/>
<path d="M502.5,470 L526,470 L525,479 C531,480 534,484 528,486 L502.5,486 Z" fill="#121212"/>
<path d="M539,470 L563,470 L563,479 C569,480 572,484 566,486 L539,486 Z" fill="#121212"/>
<path d="M470.5,455.5 L504,460 L506,468.5 L484.5,475.5 C478,470 473,463 470.5,455.5 Z" fill="#36bce8" stroke="#121212" stroke-width="1.8"/>
<path d="M476,462 L482,465 M485,467 L495,466 M480,469 L488,472" fill="none" stroke="#167aa8" stroke-width="1"/>
<path d="M471.3,452 C471,446 474,441 479,437 L481,435.5 C486,436 490,436.5 493,437.7 C497,441 500,444 501.2,448 C504,452 505.5,455 505,457.3 C503,461 500,463 497.4,463.8 C493,463 489,462.5 485.3,462 C481,461 478,460.5 476,459.2 C473,457 471.5,455 471.3,452 Z" fill="#b27a3c" stroke="#121212" stroke-width="1.8"/>
<path d="M480,441 C486,440 492,442 495,446 M476,452 C480,455 484,456 488,456" fill="none" stroke="#7e5020" stroke-width="0.9"/>
<path d="M563.4,447 C567,444 571,443 574.6,443.2 C580,443 586,443.5 590.4,444.1 C594,446 596,448 597,450.7 L599,455.3 L570,465 C567,462 565,459 564.3,456.3 C563,453 563,450 563.4,447 Z" fill="#b27a3c" stroke="#121212" stroke-width="1.8"/>
<path d="M570,465.6 L590.4,450.7 L600.7,460 L579.3,479.6 Z" fill="#36bce8" stroke="#121212" stroke-width="1.9"/>
<path d="M574,470 L594,455 M577,475 L597.5,458.5 M582,462 L586,469" fill="none" stroke="#0e4e70" stroke-width="1"/>
</g></g></svg>
<div class="a" style="left:808px;top:40px;width:3px;height:598px;background:#252525;"></div>
<div class="a" style="left:811px;top:40px;width:213px;height:8px;background:#272727;"></div>
<svg class="a" style="left:1013px;top:42px;" width="6" height="4" viewBox="0 0 6 4"><path d="M0 2l2-2v4zM6 2l-2-2v4z" fill="#bbb"/></svg>
<div class="a" style="left:811px;top:48px;width:213px;height:10px;background:#2f2f2f;"></div>
<div class="a" style="left:811px;top:47px;width:213px;height:2px;background:#242424;"></div>
<div class="a" style="left:811px;top:49px;width:40px;height:9px;background:#474747;"></div>
<div class="t" style="top:50.35px;font-size:6.9px;line-height:6.9px;color:#ececec;font-weight:bold;left:814.5px;">Properties</div>
<svg class="a" style="left:1012px;top:50px;" width="10" height="6" viewBox="0 0 10 6"><path d="M0 3h3" stroke="#aaa" stroke-width="1"/><rect x="4.5" y="0.5" width="5" height="5" fill="#5a5a5a" stroke="#777" stroke-width="0.6"/></svg>
<div class="a" style="left:811px;top:58px;width:213px;height:329px;background:#474747;"></div>
<svg class="a" style="left:827px;top:65px;" width="13" height="12" viewBox="0 0 13 12"><path d="M1.5 11l1.2-5 5.3-4.8 3.8 3.8-4.8 5.3z" fill="#d8d8d8"/><path d="M1.5 11l3.6-3.6" stroke="#474747" stroke-width="0.9"/><circle cx="5.6" cy="6.9" r="1" fill="#474747"/></svg>
<div class="t" style="top:66.00px;font-size:7.6px;line-height:7.6px;color:#dcdcdc;left:855px;">Pen Tool</div>
<div class="a" style="left:811px;top:95.5px;width:213px;height:1.5px;background:#2a2a2a;"></div>
<div class="a" style="left:811px;top:96px;width:213px;height:12px;background:#434343;"></div>
<div class="a" style="left:811px;top:108px;width:213px;height:1px;background:#363636;"></div>
<svg class="a" style="left:815px;top:101px;" width="6" height="4" viewBox="0 0 6 4"><path d="M0 0h6L3 4z" fill="#d8d8d8"/></svg>
<div class="t" style="top:99.30px;font-size:7.4px;line-height:7.4px;color:#dcdcdc;left:823px;">Fill and Stroke</div>
<svg class="a" style="left:842px;top:114px;" width="10" height="11" viewBox="0 0 10 11"><path d="M1.5 9.5l6-6.5 1.5 1.5-6 6.5-2 0.5z" fill="#dcdcdc"/><circle cx="8.5" cy="2.2" r="1.6" fill="#dcdcdc"/></svg>
<div class="a" style="left:861px;top:116px;width:19px;height:9px;background:#8a4630;box-sizing:border-box;border:1px solid #2e2e2e;"></div>
<svg class="a" style="left:918px;top:113px;" width="11" height="12" viewBox="0 0 11 12"><path d="M1.5 6l3.5-3.5 3.5 3.5-3.5 3.5z" fill="#dcdcdc"/><path d="M8.5 6.5q2 2.5 0.5 4" stroke="#dcdcdc" fill="none"/><circle cx="4.5" cy="1.6" r="1.1" fill="#dcdcdc"/></svg>
<div class="a" style="left:934px;top:115px;width:19px;height:10px;background:#cdbfc2;box-sizing:border-box;border:1px solid #3a3a3a;"></div>
<svg class="a" style="left:934px;top:115px;" width="19" height="10" viewBox="0 0 19 10"><path d="M2 8.5L17 1.5" stroke="#b04040" stroke-width="0.9"/></svg>
<div class="a" style="left:811px;top:130px;width:213px;height:1px;background:#3a3a3a;"></div>
<div class="a" style="left:839px;top:134px;width:14px;height:13px;background:#2a2a2a;box-sizing:border-box;border:2px solid #1e1e1e;"></div>
<div class="a" style="left:842px;top:137px;width:8px;height:7px;background:#8a8a8a;"></div>
<div class="t" style="top:137.55px;font-size:7.5px;line-height:7.5px;color:#dcdcdc;left:858px;">Object drawing mode on</div>
<div class="a" style="left:811px;top:153px;width:213px;height:1px;background:#3a3a3a;"></div>
<div class="t" style="top:157.55px;font-size:7.5px;line-height:7.5px;color:#d2d2d2;right:174px;">Stroke:</div>
<div class="a" style="left:856px;top:160px;width:97px;height:3px;background:#1c1c1c;border-radius:1px;"></div>
<div class="a" style="left:857px;top:158px;width:5px;height:6px;background:#555;box-sizing:border-box;border:1px solid #222;"></div>
<div class="a" style="left:964px;top:157px;width:28px;height:10px;background:#b2b2b2;box-sizing:border-box;border:1px solid #888;"></div>
<div class="t" style="top:158.45px;font-size:7.5px;line-height:7.5px;color:#1e1e1e;left:966px;">1.00</div>
<div class="t" style="top:174.85px;font-size:7.5px;line-height:7.5px;color:#d2d2d2;right:174px;">Style:</div>
<svg class="a" style="left:860px;top:173px;" width="9" height="11" viewBox="0 0 9 11"><circle cx="2" cy="2" r="1.2" fill="#ddd"/><circle cx="5" cy="1.5" r="1.2" fill="#ddd"/><circle cx="7.5" cy="3" r="1.1" fill="#ddd"/><rect x="2.5" y="5" width="4" height="5" rx="1" fill="#ddd"/></svg>
<div class="a" style="left:877px;top:174px;width:117px;height:11px;background:#3c3c3c;box-sizing:border-box;border:1px solid #2a2a2a;border-radius:2px;"></div>
<div class="a" style="left:884px;top:178.5px;width:92px;height:2px;background:#f4f4f4;"></div>
<div class="a" style="left:979px;top:175px;width:1px;height:9px;background:#2e2e2e;"></div>
<svg class="a" style="left:984px;top:178px;" width="6" height="4" viewBox="0 0 6 4"><path d="M0 0h6L3 4z" fill="#ccc"/></svg>
<svg class="a" style="left:1001px;top:173px;" width="10" height="11" viewBox="0 0 10 11"><path d="M1 10l6-6.5 1.5 1.5-6 6.5z" fill="#d0d0d0"/><circle cx="8" cy="2.5" r="1.8" fill="#d0d0d0"/></svg>
<div class="t" style="top:191.75px;font-size:7.5px;line-height:7.5px;color:#d2d2d2;right:174px;">Width:</div>
<div class="a" style="left:859px;top:190px;width:113px;height:11px;background:#3a3a3a;box-sizing:border-box;border:1px solid #2a2a2a;border-radius:2px;"></div>
<div class="a" style="left:866px;top:192px;width:88px;height:7.5px;background:linear-gradient(#f2fff2 65%,#b4e4b4);"></div>
<div class="a" style="left:958px;top:191px;width:1px;height:9px;background:#2e2e2e;"></div>
<svg class="a" style="left:960px;top:193px;" width="6" height="4" viewBox="0 0 6 4"><path d="M0 0h6L3 4z" fill="#ccc"/></svg>
<svg class="a" style="left:977px;top:191px;" width="26" height="9" viewBox="0 0 26 9"><path d="M4.5 1v7M1 4.5h7" stroke="#5e5e5e" stroke-width="1"/><path d="M14 4.5h7" stroke="#5e5e5e" stroke-width="1"/></svg>
<svg class="a" style="left:1005px;top:190px;" width="10" height="11" viewBox="0 0 10 11"><path d="M3 3.5A3.5 3.5 0 1 1 2.5 7.5" fill="none" stroke="#d8d8d8" stroke-width="1.3"/><path d="M0.5 1.5l3 2-3 1.5z" fill="#d8d8d8"/><path d="M1 10h8" stroke="#d8d8d8"/></svg>
<div class="a" style="left:811px;top:203px;width:213px;height:1px;background:#3a3a3a;"></div>
<div class="t" style="top:208.85px;font-size:7.5px;line-height:7.5px;color:#d2d2d2;right:174px;">Scale:</div>
<div class="a" style="left:859px;top:207px;width:100px;height:11px;background:#3c3c3c;box-sizing:border-box;border:1px solid #2a2a2a;border-radius:2px;"></div>
<div class="t" style="top:209.05px;font-size:7.5px;line-height:7.5px;color:#d0d0d0;left:864px;">Normal</div>
<svg class="a" style="left:951px;top:211px;" width="6" height="4" viewBox="0 0 6 4"><path d="M0 0h6L3 4z" fill="#ccc"/></svg>
<div class="a" style="left:965px;top:208px;width:7px;height:7px;background:#3a3a3a;box-sizing:border-box;border:1px solid #282828;"></div>
<div class="t" style="top:208.55px;font-size:7.5px;line-height:7.5px;color:#d2d2d2;left:973px;">Hinting</div>
<div class="a" style="left:811px;top:221px;width:213px;height:1px;background:#3a3a3a;"></div>
<div class="t" style="top:227.55px;font-size:7.5px;line-height:7.5px;color:#d2d2d2;right:174px;">Cap:</div>
<svg class="a" style="left:866px;top:227px;" width="9" height="9" viewBox="0 0 9 9"><rect x="1" y="0.5" width="6" height="3" fill="#ddd"/><rect x="1" y="5" width="6" height="3" fill="#ddd"/><path d="M0 4.2h8" stroke="#777" stroke-width="0.6"/></svg>
<svg class="a" style="left:877px;top:230px;" width="5" height="3" viewBox="0 0 5 3"><path d="M0 0h5L2.5 3z" fill="#ccc"/></svg>
<div class="t" style="top:242.55px;font-size:7.5px;line-height:7.5px;color:#d2d2d2;right:174px;">Join:</div>
<svg class="a" style="left:866px;top:241px;" width="9" height="10" viewBox="0 0 9 10"><path d="M1 9V4a3 3 0 0 1 3-3h4v3H5a1 1 0 0 0-1 1v4z" fill="#ddd"/></svg>
<svg class="a" style="left:877px;top:245px;" width="5" height="3" viewBox="0 0 5 3"><path d="M0 0h5L2.5 3z" fill="#ccc"/></svg>
<div class="t" style="top:242.55px;font-size:7.5px;line-height:7.5px;color:#d2d2d2;left:936px;">Miter:</div>
<div class="t" style="top:242.55px;font-size:7.5px;line-height:7.5px;color:#6e6e6e;left:958px;">3.00</div>
<div class="a" style="left:811px;top:386px;width:213px;height:1px;background:#2a2a2a;"></div>
<div class="a" style="left:811px;top:387px;width:213px;height:11px;background:#2f2f2f;"></div>
<div class="a" style="left:811px;top:386px;width:213px;height:2px;background:#242424;"></div>
<div class="a" style="left:811px;top:388px;width:29px;height:10px;background:#474747;"></div>
<div class="t" style="top:389.85px;font-size:6.9px;line-height:6.9px;color:#ececec;font-weight:bold;left:814.5px;">Library</div>
<div class="a" style="left:841px;top:388px;width:46px;height:10px;background:#2a2a2a;box-sizing:border-box;border-right:1px solid #252525;"></div>
<div class="t" style="top:389.70px;font-size:7.2px;line-height:7.2px;color:#c8c8c8;left:844px;">CC Libraries</div>
<svg class="a" style="left:1012px;top:389px;" width="10" height="6" viewBox="0 0 10 6"><path d="M0 3h3" stroke="#aaa" stroke-width="1"/><rect x="4.5" y="0.5" width="5" height="5" fill="#5a5a5a" stroke="#777" stroke-width="0.6"/></svg>
<div class="a" style="left:811px;top:398px;width:213px;height:232px;background:#474747;"></div>
<div class="a" style="left:814px;top:401px;width:174px;height:12px;background:#3a3a3a;box-sizing:border-box;border:1px solid #2c2c2c;border-radius:2px;"></div>
<div class="t" style="top:403.40px;font-size:7.8px;line-height:7.8px;color:#cfcfcf;left:818px;">bunny.fla</div>
<svg class="a" style="left:980px;top:405px;" width="6" height="4" viewBox="0 0 6 4"><path d="M0 0h6L3 4z" fill="#ccc"/></svg>
<svg class="a" style="left:991px;top:402px;" width="30" height="10" viewBox="0 0 30 10"><path d="M1 5h3" stroke="#ccc"/><path d="M4 2h5v6H4z" fill="#ccc"/><rect x="17" y="1" width="6" height="6" fill="#bbb"/><rect x="20" y="4" width="6" height="6" fill="#ddd"/></svg>
<div class="a" style="left:811px;top:414px;width:213px;height:1px;background:#2c2c2c;"></div>
<div class="a" style="left:811px;top:415px;width:213px;height:82px;background:#e1ddbd;"></div>
<svg class="a" style="left:867px;top:491px;" width="7" height="8" viewBox="0 0 7 8"><path d="M3.5 0v8M0 4h7" stroke="#555" stroke-width="0.8"/></svg>
<svg class="a" style="left:0;top:0;" width="1024" height="643" viewBox="0 0 1024 643"><g transform="translate(641.4,243.2) scale(0.52)">
<g stroke-linejoin="round" stroke-linecap="round">
<path d="M464,353 C467,347 476,346 487,348.5 C498,351 508,358 514,367 C518,373 521,380 523,389 L515,391 C505,388 490,381 480,373.5 C472,367 465,360 464,353 Z" fill="#2db4e4" stroke="#121212" stroke-width="2.8"/>
<path d="M470,365 C480,362 498,366 511,381 L516,390 C505,388 490,381 480,373.5 C476,370 472,368 470,365 Z" fill="#1c8fc2"/>
<path d="M478.5,363.5 C488,363 502,368 511,381" fill="none" stroke="#121212" stroke-width="1.5"/>
<path d="M512.5,339 C518,336 530,341 539,348.5 C550,358 557,370 559.7,386 L557,388 C550,385 540,377 530,367.3 C522,360 515,350 512.5,339 Z" fill="#2db4e4" stroke="#121212" stroke-width="2.8"/>
<path d="M514,342 C517,351 523,360 530,367.3 C540,377 550,385 557,388 C546,372 532,356 514,342 Z" fill="#1c8fc2"/>
<path d="M481.6,437 C485,431 492,426 499.3,423.7 L503,439 L489,441 Z" fill="#2db4e4" stroke="#121212" stroke-width="2"/>
<path d="M500,438 L565,437 L565,470 C545,472 520,472 500,470 Z" fill="#444444" stroke="#121212" stroke-width="2"/>
<path d="M521,445 L529,443.5 L540,460 L534,465 Z" fill="#727272" stroke="#121212" stroke-width="1"/>
<path d="M550,443 L558,443 L532,470 L524,470 Z" fill="#727272" stroke="#121212" stroke-width="1"/>
<path d="M516,389 L566,390 C567,405 568,425 570.5,440 L511,444 C507,436 502,428 498.5,419 C504,409 510,398 516,389 Z" fill="#2db4e4" stroke="#121212" stroke-width="2.6"/>
<path d="M498.5,419 C503,430 508,438 511,444 L535,442 C520,436 506,428 498.5,419 Z" fill="#1c8fc2"/>
<path d="M512,399 C508,408 510,418 516,423" fill="none" stroke="#176f9a" stroke-width="1.2"/>
<path d="M519,394.5 C530,392 545,395 553,398 L552,405 C542,402 530,401 521,403.5 Z" fill="#121212"/>
<path d="M552,397 L576,397 L577,405 C568,405 558,406 553,407 Z" fill="#121212"/>
<path d="M526,404 C532,402.5 540,403 545,405 C545,410 540,413.5 535,413.5 C529,413.5 526,409 526,404 Z" fill="#f4f4f4" stroke="#121212" stroke-width="1.4"/>
<circle cx="541" cy="408.5" r="2.4" fill="#222"/>
<path d="M554.5,405.5 C560,404.5 566,405 571,406.5 C571,411.5 567,415 562,415 C557,415 554.5,410.5 554.5,405.5 Z" fill="#f4f4f4" stroke="#121212" stroke-width="1.4"/>
<circle cx="568" cy="410" r="2.2" fill="#222"/>
<path d="M548,421.5 L562.5,421 L555,426.5 Z" fill="#e6968c" stroke="#121212" stroke-width="1.2"/>
<path d="M508.5,418 C516,420 528,424 545,431" fill="none" stroke="#121212" stroke-width="1.8"/>
<path d="M502.5,470 L526,470 L525,479 C531,480 534,484 528,486 L502.5,486 Z" fill="#121212"/>
<path d="M539,470 L563,470 L563,479 C569,480 572,484 566,486 L539,486 Z" fill="#121212"/>
<path d="M470.5,455.5 L504,460 L506,468.5 L484.5,475.5 C478,470 473,463 470.5,455.5 Z" fill="#36bce8" stroke="#121212" stroke-width="1.8"/>
<path d="M476,462 L482,465 M485,467 L495,466 M480,469 L488,472" fill="none" stroke="#167aa8" stroke-width="1"/>
<path d="M471.3,452 C471,446 474,441 479,437 L481,435.5 C486,436 490,436.5 493,437.7 C497,441 500,444 501.2,448 C504,452 505.5,455 505,457.3 C503,461 500,463 497.4,463.8 C493,463 489,462.5 485.3,462 C481,461 478,460.5 476,459.2 C473,457 471.5,455 471.3,452 Z" fill="#b27a3c" stroke="#121212" stroke-width="1.8"/>
<path d="M480,441 C486,440 492,442 495,446 M476,452 C480,455 484,456 488,456" fill="none" stroke="#7e5020" stroke-width="0.9"/>
<path d="M563.4,447 C567,444 571,443 574.6,443.2 C580,443 586,443.5 590.4,444.1 C594,446 596,448 597,450.7 L599,455.3 L570,465 C567,462 565,459 564.3,456.3 C563,453 563,450 563.4,447 Z" fill="#b27a3c" stroke="#121212" stroke-width="1.8"/>
<path d="M570,465.6 L590.4,450.7 L600.7,460 L579.3,479.6 Z" fill="#36bce8" stroke="#121212" stroke-width="1.9"/>
<path d="M574,470 L594,455 M577,475 L597.5,458.5 M582,462 L586,469" fill="none" stroke="#0e4e70" stroke-width="1"/>
</g></g></svg>
<div class="a" style="left:811px;top:497px;width:213px;height:1px;background:#2c2c2c;"></div>
<div class="t" style="top:502.80px;font-size:7px;line-height:7px;color:#cfcfcf;left:813px;">34 items</div>
<div class="a" style="left:913px;top:502px;width:109px;height:10px;background:#a9a9a9;box-sizing:border-box;border:1px solid #7d7d7d;"></div>
<svg class="a" style="left:916px;top:503px;" width="9" height="9" viewBox="0 0 9 9"><circle cx="5.5" cy="3.5" r="2.6" fill="none" stroke="#555" stroke-width="0.9"/><path d="M3.5 5.5L1 8" stroke="#555" stroke-width="1"/></svg>
<div class="a" style="left:811px;top:514px;width:213px;height:12px;background:#3e3e3e;"></div>
<div class="a" style="left:811px;top:514px;width:213px;height:1px;background:#2a2a2a;"></div>
<div class="a" style="left:811px;top:525px;width:213px;height:1px;background:#2a2a2a;"></div>
<div class="t" style="top:516.55px;font-size:7.5px;line-height:7.5px;color:#cfcfcf;left:814px;">Name</div>
<svg class="a" style="left:942px;top:517px;" width="7" height="4" viewBox="0 0 7 4"><path d="M0 4L3.5 0 7 4z" fill="#ddd"/></svg>
<div class="a" style="left:951px;top:515px;width:1px;height:10px;background:#2e2e2e;"></div>
<div class="t" style="top:516.55px;font-size:7.5px;line-height:7.5px;color:#cfcfcf;left:955px;">Linkage</div>
<div class="a" style="left:993px;top:515px;width:1px;height:10px;background:#2e2e2e;"></div>
<div class="t" style="top:516.55px;font-size:7.5px;line-height:7.5px;color:#cfcfcf;left:998px;">Use Count</div>
<div class="a" style="left:811px;top:538px;width:213px;height:11px;background:#555555;"></div>
<svg class="a" style="left:823px;top:527px;" width="10" height="10" viewBox="0 0 10 10"><path d="M0.5 9.5V1M0.5 9.5H9.5M1.5 8l2.5-3 2 1.5 2.5-4" fill="none" stroke="#ddd" stroke-width="1"/><path d="M6 1.5q2.5 0 3 2.5" fill="none" stroke="#ddd" stroke-width="0.8"/><rect x="1" y="6" width="3" height="3" fill="#ddd"/></svg>
<div class="t" style="top:528.55px;font-size:7.5px;line-height:7.5px;color:#d8d8d8;left:837px;">Background</div>
<div class="t" style="top:528.55px;font-size:7.5px;line-height:7.5px;color:#d8d8d8;left:1000px;">1</div>
<svg class="a" style="left:823px;top:538px;" width="10" height="10" viewBox="0 0 10 10"><path d="M0.5 9.5V1M0.5 9.5H9.5M1.5 8l2.5-3 2 1.5 2.5-4" fill="none" stroke="#ddd" stroke-width="1"/><path d="M6 1.5q2.5 0 3 2.5" fill="none" stroke="#ddd" stroke-width="0.8"/><rect x="1" y="6" width="3" height="3" fill="#ddd"/></svg>
<div class="t" style="top:540.05px;font-size:7.5px;line-height:7.5px;color:#d8d8d8;left:837px;">Bunny</div>
<div class="t" style="top:540.05px;font-size:7.5px;line-height:7.5px;color:#d8d8d8;left:1000px;">0</div>
<svg class="a" style="left:823px;top:550px;" width="10" height="10" viewBox="0 0 10 10"><path d="M0.5 9.5V1M0.5 9.5H9.5M1.5 8l2.5-3 2 1.5 2.5-4" fill="none" stroke="#ddd" stroke-width="1"/><path d="M6 1.5q2.5 0 3 2.5" fill="none" stroke="#ddd" stroke-width="0.8"/><rect x="1" y="6" width="3" height="3" fill="#ddd"/></svg>
<div class="t" style="top:551.85px;font-size:7.5px;line-height:7.5px;color:#d8d8d8;left:837px;">Button Attack</div>
<div class="t" style="top:551.85px;font-size:7.5px;line-height:7.5px;color:#d8d8d8;left:1000px;">0</div>
<svg class="a" style="left:823px;top:562px;" width="10" height="10" viewBox="0 0 10 10"><path d="M0.5 9.5V1M0.5 9.5H9.5M1.5 8l2.5-3 2 1.5 2.5-4" fill="none" stroke="#ddd" stroke-width="1"/><path d="M6 1.5q2.5 0 3 2.5" fill="none" stroke="#ddd" stroke-width="0.8"/><rect x="1" y="6" width="3" height="3" fill="#ddd"/></svg>
<div class="t" style="top:563.55px;font-size:7.5px;line-height:7.5px;color:#d8d8d8;left:837px;">Button Defend</div>
<div class="t" style="top:563.55px;font-size:7.5px;line-height:7.5px;color:#d8d8d8;left:1000px;">0</div>
<svg class="a" style="left:815px;top:576px;" width="5" height="6" viewBox="0 0 5 6"><path d="M0 0l4.5 3L0 6z" fill="#ccc"/></svg>
<svg class="a" style="left:823px;top:574px;" width="11" height="9" viewBox="0 0 11 9"><path d="M0.5 1.5h4l1 1.5h4.5v5.5H0.5z" fill="#d6d6d6"/></svg>
<div class="t" style="top:575.55px;font-size:7.5px;line-height:7.5px;color:#d8d8d8;left:837px;">Resources</div>
<div class="a" style="left:811px;top:630px;width:213px;height:8px;background:#3a3a3a;"></div>
<svg class="a" style="left:813px;top:631px;" width="40" height="7" viewBox="0 0 40 7"><rect x="1" y="1" width="5" height="6" fill="#ccc"/><path d="M11 1.5h3l1 1h4v4.5h-8z" fill="#ccc"/><circle cx="25" cy="4" r="3" fill="#ccc"/><path d="M25 2.5v3" stroke="#333"/><rect x="32" y="1.5" width="5" height="5.5" fill="#666"/></svg>
<svg class="a" style="left:856px;top:632px;" width="4" height="5" viewBox="0 0 4 5"><path d="M3.5 0L0 2.5 3.5 5z" fill="#ccc"/></svg>
<div class="a" style="left:862px;top:631px;width:100px;height:7px;background:#474747;"></div>
<div class="a" style="left:963px;top:631px;width:56px;height:7px;background:#2e2e2e;"></div>
<svg class="a" style="left:1019px;top:632px;" width="4" height="5" viewBox="0 0 4 5"><path d="M0 0l3.5 2.5L0 5z" fill="#ccc"/></svg>
<div class="a" style="left:0px;top:638px;width:1024px;height:5px;background:linear-gradient(#2e2e2e 0px,#2e2e2e 1px,#6c6e70 1px,#6c6e70 3px,#cdd0d2 3px);"></div>
</body></html>
